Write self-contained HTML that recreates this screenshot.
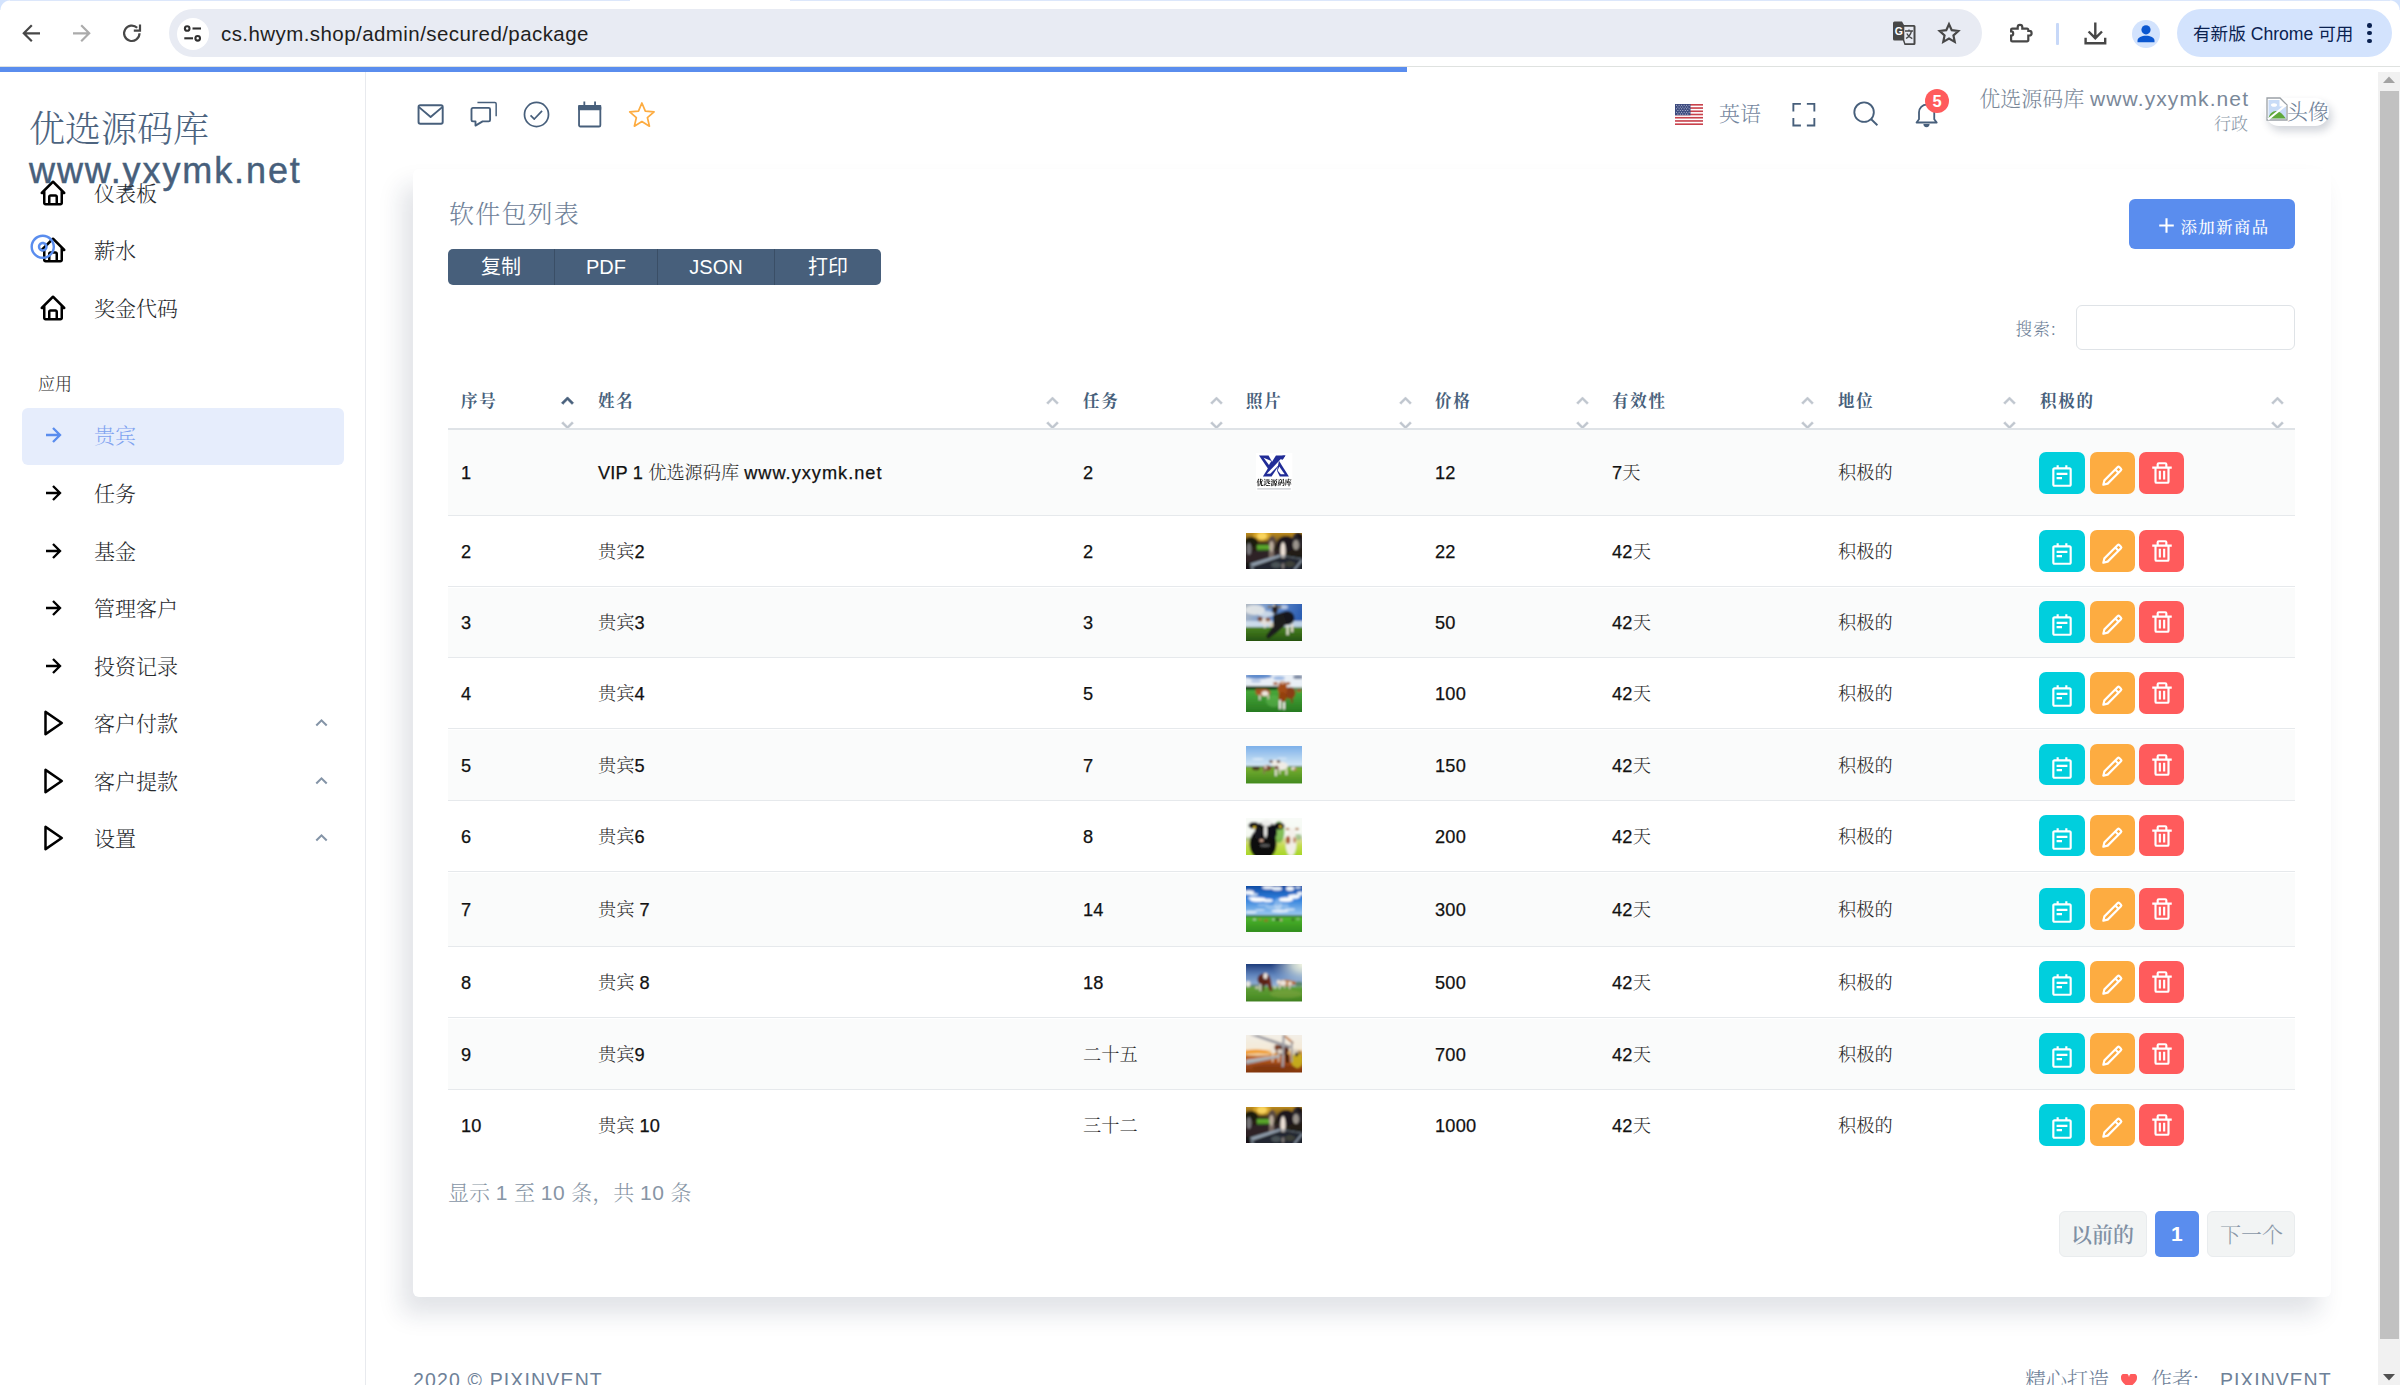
<!DOCTYPE html><html lang="zh-CN"><head><meta charset="utf-8"><title>软件包列表</title><style>
html,body{margin:0;padding:0;}
body{width:2400px;height:1385px;overflow:hidden;background:#fff;position:relative;font-family:"Liberation Sans","Noto Serif CJK SC",serif;font-weight:300;}
.a{position:absolute;white-space:nowrap;}
.sans{font-family:"Liberation Sans","Noto Sans CJK SC",sans-serif;font-weight:400;}
.td{font-weight:300;}
.td span{-webkit-text-stroke:0.25px #111;color:#111;font-weight:400}
</style></head><body><div class="a" style="left:364.7px;top:72.0px;width:1.4px;height:1313.0px;background:#E8EAEE;"></div><div class="a " style="left:29.0px;top:105.0px;line-height:50px;font-size:36.0px;color:#4d647f;">优选源码库</div><div class="a " style="left:29.0px;top:146.0px;line-height:50px;font-size:36.0px;color:#475F7B;letter-spacing:1.9px;-webkit-text-stroke:0.45px #475F7B;">www.yxymk.net</div><svg class="a" style="left:38.0px;top:178.0px;" width="30.0" height="30.0" viewBox="0 0 24 24" fill="#000"><path d="M3 13h1v7c0 1.103.897 2 2 2h12c1.103 0 2-.897 2-2v-7h1a1 1 0 0 0 .707-1.707l-9-9a.999.999 0 0 0-1.414 0l-9 9A1 1 0 0 0 3 13zm7 7v-5h4v5h-4zm2-15.586 6 6V15l.001 5H16v-5c0-1.103-.897-2-2-2h-4c-1.103 0-2 .897-2 2v5H6v-9.586l6-6z"/></svg><div class="a " style="left:94.0px;top:178.0px;line-height:32px;font-size:21.0px;color:#26292d;font-weight:300;">仪表板</div><svg class="a" style="left:38.0px;top:235.0px;" width="30.0" height="30.0" viewBox="0 0 24 24" fill="#000"><path d="M3 13h1v7c0 1.103.897 2 2 2h12c1.103 0 2-.897 2-2v-7h1a1 1 0 0 0 .707-1.707l-9-9a.999.999 0 0 0-1.414 0l-9 9A1 1 0 0 0 3 13zm7 7v-5h4v5h-4zm2-15.586 6 6V15l.001 5H16v-5c0-1.103-.897-2-2-2h-4c-1.103 0-2 .897-2 2v5H6v-9.586l6-6z"/></svg><div class="a " style="left:94.0px;top:235.0px;line-height:32px;font-size:21.0px;color:#26292d;font-weight:300;">薪水</div><svg class="a" style="left:38.0px;top:293.0px;" width="30.0" height="30.0" viewBox="0 0 24 24" fill="#000"><path d="M3 13h1v7c0 1.103.897 2 2 2h12c1.103 0 2-.897 2-2v-7h1a1 1 0 0 0 .707-1.707l-9-9a.999.999 0 0 0-1.414 0l-9 9A1 1 0 0 0 3 13zm7 7v-5h4v5h-4zm2-15.586 6 6V15l.001 5H16v-5c0-1.103-.897-2-2-2h-4c-1.103 0-2 .897-2 2v5H6v-9.586l6-6z"/></svg><div class="a " style="left:94.0px;top:293.0px;line-height:32px;font-size:21.0px;color:#26292d;font-weight:300;">奖金代码</div><svg class="a" style="left:27.8px;top:232.4px;" width="29.5" height="29.5" viewBox="0 0 24 24" fill="#5A8DEE"><path d="M12 2C6.486 2 2 6.486 2 12s4.486 10 10 10 10-4.486 10-10S17.514 2 12 2zm0 18c-4.411 0-8-3.589-8-8s3.589-8 8-8 8 3.589 8 8-3.589 8-8 8z"/><path d="M12 8c-2.206 0-4 1.794-4 4s1.794 4 4 4 4-1.794 4-4-1.794-4-4-4zm0 6c-1.103 0-2-.897-2-2s.897-2 2-2 2 .897 2 2-.897 2-2 2z"/></svg><div class="a " style="left:38.0px;top:372.0px;line-height:26px;font-size:17.0px;color:#2c2c2c;">应用</div><div class="a" style="left:22.0px;top:408.0px;width:322.0px;height:56.5px;background:#E6EDFC;border-radius:6px;"></div><svg class="a" style="left:39.0px;top:421.0px;" width="28.0" height="28.0" viewBox="0 0 24 24" fill="#5A8DEE"><path d="m11.293 17.293 1.414 1.414L19.414 12l-6.707-6.707-1.414 1.414L15.586 11H6v2h9.586z"/></svg><div class="a " style="left:94.0px;top:420.0px;line-height:32px;font-size:21.0px;color:#7FA3F0;font-weight:300;">贵宾</div><svg class="a" style="left:39.0px;top:479.0px;" width="28.0" height="28.0" viewBox="0 0 24 24" fill="#000"><path d="m11.293 17.293 1.414 1.414L19.414 12l-6.707-6.707-1.414 1.414L15.586 11H6v2h9.586z"/></svg><div class="a " style="left:94.0px;top:478.0px;line-height:32px;font-size:21.0px;color:#26292d;font-weight:300;">任务</div><svg class="a" style="left:39.0px;top:537.0px;" width="28.0" height="28.0" viewBox="0 0 24 24" fill="#000"><path d="m11.293 17.293 1.414 1.414L19.414 12l-6.707-6.707-1.414 1.414L15.586 11H6v2h9.586z"/></svg><div class="a " style="left:94.0px;top:536.0px;line-height:32px;font-size:21.0px;color:#26292d;font-weight:300;">基金</div><svg class="a" style="left:39.0px;top:594.0px;" width="28.0" height="28.0" viewBox="0 0 24 24" fill="#000"><path d="m11.293 17.293 1.414 1.414L19.414 12l-6.707-6.707-1.414 1.414L15.586 11H6v2h9.586z"/></svg><div class="a " style="left:94.0px;top:593.0px;line-height:32px;font-size:21.0px;color:#26292d;font-weight:300;">管理客户</div><svg class="a" style="left:39.0px;top:652.0px;" width="28.0" height="28.0" viewBox="0 0 24 24" fill="#000"><path d="m11.293 17.293 1.414 1.414L19.414 12l-6.707-6.707-1.414 1.414L15.586 11H6v2h9.586z"/></svg><div class="a " style="left:94.0px;top:651.0px;line-height:32px;font-size:21.0px;color:#26292d;font-weight:300;">投资记录</div><svg class="a" style="left:38.0px;top:708.0px;" width="30.0" height="30.0" viewBox="0 0 24 24" fill="#000"><path d="M5.536 21.886a1.004 1.004 0 0 0 1.033-.064l13-9a1 1 0 0 0 0-1.644l-13-9A1 1 0 0 0 5 3v18a1 1 0 0 0 .536.886zM7 4.909 17.243 12 7 19.091V4.909z"/></svg><svg class="a" style="left:308.5px;top:710.5px;" width="25.0" height="25.0" viewBox="0 0 24 24" fill="#8494A7"><path d="m6.293 13.293 1.414 1.414L12 10.414l4.293 4.293 1.414-1.414L12 7.586z"/></svg><div class="a " style="left:94.0px;top:708.0px;line-height:32px;font-size:21.0px;color:#26292d;font-weight:300;">客户付款</div><svg class="a" style="left:38.0px;top:766.0px;" width="30.0" height="30.0" viewBox="0 0 24 24" fill="#000"><path d="M5.536 21.886a1.004 1.004 0 0 0 1.033-.064l13-9a1 1 0 0 0 0-1.644l-13-9A1 1 0 0 0 5 3v18a1 1 0 0 0 .536.886zM7 4.909 17.243 12 7 19.091V4.909z"/></svg><svg class="a" style="left:308.5px;top:768.5px;" width="25.0" height="25.0" viewBox="0 0 24 24" fill="#8494A7"><path d="m6.293 13.293 1.414 1.414L12 10.414l4.293 4.293 1.414-1.414L12 7.586z"/></svg><div class="a " style="left:94.0px;top:766.0px;line-height:32px;font-size:21.0px;color:#26292d;font-weight:300;">客户提款</div><svg class="a" style="left:38.0px;top:823.0px;" width="30.0" height="30.0" viewBox="0 0 24 24" fill="#000"><path d="M5.536 21.886a1.004 1.004 0 0 0 1.033-.064l13-9a1 1 0 0 0 0-1.644l-13-9A1 1 0 0 0 5 3v18a1 1 0 0 0 .536.886zM7 4.909 17.243 12 7 19.091V4.909z"/></svg><svg class="a" style="left:308.5px;top:825.5px;" width="25.0" height="25.0" viewBox="0 0 24 24" fill="#8494A7"><path d="m6.293 13.293 1.414 1.414L12 10.414l4.293 4.293 1.414-1.414L12 7.586z"/></svg><div class="a " style="left:94.0px;top:823.0px;line-height:32px;font-size:21.0px;color:#26292d;font-weight:300;">设置</div><svg class="a" style="left:414.5px;top:99.0px;color:#475F7B" width="31.0" height="31.0" viewBox="0 0 24 24" fill="none" stroke="#475F7B" stroke-width="1.5" stroke-linejoin="round"><rect x="2.750" y="4.900" width="18.700" height="14.300" rx="1.300"/><path d="M3.100 6.300 12.100 14 21.100 6.300"/></svg><svg class="a" style="left:467.5px;top:98.5px;color:#475F7B" width="31.0" height="31.0" viewBox="0 0 24 24" fill="none" stroke="#475F7B" stroke-width="1.45" stroke-linejoin="round"><path d="M3.800 6.900h12.200a1.100 1.100 0 0 1 1.100 1.100v8.200a1.100 1.100 0 0 1-1.100 1.100h-4.700L5.800 20.600V17.300H3.800a1.100 1.100 0 0 1-1.100-1.100V8a1.100 1.100 0 0 1 1.100-1.100z"/><path d="M7.300 2.750H20.800a1 1 0 0 1 1 1V13.400" stroke-width="1.150"/></svg><svg class="a" style="left:520.5px;top:99.0px;color:#475F7B" width="31.0" height="31.0" viewBox="0 0 24 24" fill="none" stroke="#475F7B" stroke-width="1.35" stroke-linejoin="round"><circle cx="12" cy="12" r="9.300"/><path d="M7.400 12.700 10.300 15.500 16.300 9.200"/></svg><svg class="a" style="left:573.5px;top:99.0px;color:#475F7B" width="31.0" height="31.0" viewBox="0 0 24 24" fill="none" stroke="#475F7B" stroke-width="1.4" stroke-linejoin="round"><rect x="3.900" y="5.300" width="16.500" height="16" rx="1"/><rect x="3.900" y="5.300" width="16.500" height="2.700" fill="currentColor"/><path d="M8 2v3.500M16.300 2v3.500"/></svg><svg class="a" style="left:626.0px;top:99.0px;color:#FDAC41" width="31.0" height="31.0" viewBox="0 0 24 24" fill="none" stroke="#FDAC41" stroke-width="1.35" stroke-linejoin="round"><polygon points="12.30,3.10 14.95,9.36 21.72,9.94 16.58,14.39 18.12,21.01 12.30,17.50 6.480,21.010 8.020,14.390 2.880,9.940 9.650,9.360"/></svg><svg class="a" style="left:1675px;top:104px" width="28" height="21" viewBox="0 0 28 21"><rect width="28" height="21" fill="#fff"/><rect y="0.00" width="28" height="1.62" fill="#C8414B"/><rect y="3.23" width="28" height="1.62" fill="#C8414B"/><rect y="6.46" width="28" height="1.62" fill="#C8414B"/><rect y="9.69" width="28" height="1.62" fill="#C8414B"/><rect y="12.92" width="28" height="1.62" fill="#C8414B"/><rect y="16.15" width="28" height="1.62" fill="#C8414B"/><rect y="19.38" width="28" height="1.62" fill="#C8414B"/><rect width="15.5" height="11.3" fill="#3C4A7E"/><circle cx="1.6" cy="1.3" r="0.55" fill="#cfd3e6"/><circle cx="4.1" cy="1.3" r="0.55" fill="#cfd3e6"/><circle cx="6.6" cy="1.3" r="0.55" fill="#cfd3e6"/><circle cx="9.1" cy="1.3" r="0.55" fill="#cfd3e6"/><circle cx="11.6" cy="1.3" r="0.55" fill="#cfd3e6"/><circle cx="14.1" cy="1.3" r="0.55" fill="#cfd3e6"/><circle cx="2.9" cy="3.0" r="0.55" fill="#cfd3e6"/><circle cx="5.3" cy="3.0" r="0.55" fill="#cfd3e6"/><circle cx="7.8" cy="3.0" r="0.55" fill="#cfd3e6"/><circle cx="10.3" cy="3.0" r="0.55" fill="#cfd3e6"/><circle cx="12.8" cy="3.0" r="0.55" fill="#cfd3e6"/><circle cx="1.6" cy="4.8" r="0.55" fill="#cfd3e6"/><circle cx="4.1" cy="4.8" r="0.55" fill="#cfd3e6"/><circle cx="6.6" cy="4.8" r="0.55" fill="#cfd3e6"/><circle cx="9.1" cy="4.8" r="0.55" fill="#cfd3e6"/><circle cx="11.6" cy="4.8" r="0.55" fill="#cfd3e6"/><circle cx="14.1" cy="4.8" r="0.55" fill="#cfd3e6"/><circle cx="2.9" cy="6.5" r="0.55" fill="#cfd3e6"/><circle cx="5.3" cy="6.5" r="0.55" fill="#cfd3e6"/><circle cx="7.8" cy="6.5" r="0.55" fill="#cfd3e6"/><circle cx="10.3" cy="6.5" r="0.55" fill="#cfd3e6"/><circle cx="12.8" cy="6.5" r="0.55" fill="#cfd3e6"/><circle cx="1.6" cy="8.3" r="0.55" fill="#cfd3e6"/><circle cx="4.1" cy="8.3" r="0.55" fill="#cfd3e6"/><circle cx="6.6" cy="8.3" r="0.55" fill="#cfd3e6"/><circle cx="9.1" cy="8.3" r="0.55" fill="#cfd3e6"/><circle cx="11.6" cy="8.3" r="0.55" fill="#cfd3e6"/><circle cx="14.1" cy="8.3" r="0.55" fill="#cfd3e6"/><circle cx="2.9" cy="10.1" r="0.55" fill="#cfd3e6"/><circle cx="5.3" cy="10.1" r="0.55" fill="#cfd3e6"/><circle cx="7.8" cy="10.1" r="0.55" fill="#cfd3e6"/><circle cx="10.3" cy="10.1" r="0.55" fill="#cfd3e6"/><circle cx="12.8" cy="10.1" r="0.55" fill="#cfd3e6"/></svg><div class="a " style="left:1719.0px;top:98.0px;line-height:32px;font-size:21.0px;color:#7587a0;">英语</div><svg class="a" style="left:1788.0px;top:99.0px;color:#475F7B" width="31.0" height="31.0" viewBox="0 0 24 24" fill="none" stroke="#475F7B" stroke-width="1.45" stroke-linejoin="round"><path d="M4.150 9.600V3.800H10M14.600 3.800h5.800v5.800M20.400 14.700v5.800H14.600M10 20.500H4.150v-5.800" stroke-linejoin="miter"/></svg><svg class="a" style="left:1850.1px;top:98.7px;color:#475F7B" width="31.0" height="31.0" viewBox="0 0 24 24" fill="none" stroke="#475F7B" stroke-width="1.45" stroke-linejoin="round"><circle cx="10.900" cy="10.200" r="7.550"/><path d="M16.200 15.500 21.200 20.300"/></svg><svg class="a" style="left:1910.5px;top:99.0px;color:#475F7B" width="31.0" height="31.0" viewBox="0 0 24 24" fill="none" stroke="#475F7B" stroke-width="1.4" stroke-linejoin="round"><path d="M4.300 18.200 6.200 15.700V10.200a5.900 5.900 0 0 1 11.800 0v5.500l1.900 2.500z"/><path d="M9.600 19.400h4.800a2.400 2.400 0 0 1-4.800 0z" fill="currentColor" stroke="none"/></svg><div class="a" style="left:1925px;top:89px;width:24px;height:24px;border-radius:12px;background:#FF5B5C;color:#fff;font-size:16.5px;line-height:24px;text-align:center;font-weight:700">5</div><div class="a " style="right:152.0px;top:83.0px;line-height:32px;font-size:21.0px;color:#7A8899;">优选源码库 <span style="letter-spacing:1.1px;margin-right:-1.1px">www.yxymk.net</span></div><div class="a " style="right:152.0px;top:112.0px;line-height:26px;font-size:17.0px;color:#8A98A8;">行政</div><div class="a" style="left:2265px;top:98px;width:64px;height:28px;border-radius:14px;background:#fff;box-shadow:3px 5px 9px rgba(25,42,70,.2)"></div><svg class="a" style="left:2266px;top:97px" width="22" height="24" viewBox="0 0 22 24"><path d="M1 1h13l7 7v15H1z" fill="#fff" stroke="#9AA0A6" stroke-width="1.300"/><path d="M2.500 3h11v6.500l6.500 0v12H2.500z" fill="#C9DCF7"/><path d="M2.500 21.500c1-6 6-9 10-7s5 4 7.500 7z" fill="#5FA83B"/><ellipse cx="8" cy="8" rx="3" ry="1.800" fill="#fff"/><path d="M2 22.500 L20 8" stroke="#fff" stroke-width="2.200"/></svg><div class="a " style="left:2287.0px;top:96.0px;line-height:32px;font-size:21.0px;color:#6E8198;">头像</div><div class="a" style="left:412.8px;top:169px;width:1918.2px;height:1127.7px;background:#fff;border-radius:6px;box-shadow:-11px 17px 25px 0 rgba(25,42,70,.13)"></div><div class="a " style="left:449.0px;top:195.0px;line-height:38px;font-size:25.0px;color:#6E8198;letter-spacing:1.2px;">软件包列表</div><div class="a" style="left:448px;top:249px;width:433px;height:36px;border-radius:5px;background:#475F7B;"></div><div class="a" style="left:553.8px;top:249.0px;width:1.0px;height:36.0px;background:#3a4e66;"></div><div class="a" style="left:657.0px;top:249.0px;width:1.0px;height:36.0px;background:#3a4e66;"></div><div class="a" style="left:774.0px;top:249.0px;width:1.0px;height:36.0px;background:#3a4e66;"></div><div class="a sans" style="left:501px;top:249px;width:100px;margin-left:-50px;text-align:center;line-height:36px;font-size:20px;color:#fff">复制</div><div class="a sans" style="left:606px;top:249px;width:100px;margin-left:-50px;text-align:center;line-height:36px;font-size:20px;color:#fff">PDF</div><div class="a sans" style="left:716px;top:249px;width:100px;margin-left:-50px;text-align:center;line-height:36px;font-size:20px;color:#fff">JSON</div><div class="a sans" style="left:828px;top:249px;width:100px;margin-left:-50px;text-align:center;line-height:36px;font-size:20px;color:#fff">打印</div><div class="a" style="left:2129px;top:199px;width:166px;height:50px;border-radius:6px;background:#5A8DEE"></div><svg class="a" style="left:2154.0px;top:213.0px;" width="25.0" height="25.0" viewBox="0 0 24 24" fill="#fff"><path d="M19 11h-6V5h-2v6H5v2h6v6h2v-6h6z"/></svg><div class="a " style="left:2180.5px;top:215.0px;line-height:25px;font-size:16.4px;color:#fff;font-weight:500;letter-spacing:1.45px;">添加新商品</div><div class="a " style="left:2015.5px;top:316.5px;line-height:25px;font-size:16.5px;color:#6E8198;letter-spacing:1.3px;">搜索:</div><div class="a" style="left:2075.5px;top:305.2px;width:217.5px;height:42.5px;border:1.4px solid #DFE3E7;border-radius:6px;background:#fff"></div><div class="a " style="left:461.0px;top:389.0px;line-height:25px;font-size:16.5px;color:#475F7B;font-weight:700;letter-spacing:1.7px;">序号</div><svg class="a" style="left:555.0px;top:388.5px;stroke:#475F7B;stroke-width:0.8px;" width="25.0" height="25.0" viewBox="0 0 24 24" fill="#475F7B"><path d="m6.293 13.293 1.414 1.414L12 10.414l4.293 4.293 1.414-1.414L12 7.586z"/></svg><svg class="a" style="left:555.0px;top:412.0px;stroke:#BFC6CE;stroke-width:0.5px;" width="25.0" height="25.0" viewBox="0 0 24 24" fill="#BFC6CE"><path d="M16.293 9.293 12 13.586 7.707 9.293l-1.414 1.414L12 16.414l5.707-5.707z"/></svg><div class="a " style="left:598.0px;top:389.0px;line-height:25px;font-size:16.5px;color:#475F7B;font-weight:700;letter-spacing:1.7px;">姓名</div><svg class="a" style="left:1039.5px;top:388.5px;stroke:#BFC6CE;stroke-width:0.5px;" width="25.0" height="25.0" viewBox="0 0 24 24" fill="#BFC6CE"><path d="m6.293 13.293 1.414 1.414L12 10.414l4.293 4.293 1.414-1.414L12 7.586z"/></svg><svg class="a" style="left:1039.5px;top:412.0px;stroke:#BFC6CE;stroke-width:0.5px;" width="25.0" height="25.0" viewBox="0 0 24 24" fill="#BFC6CE"><path d="M16.293 9.293 12 13.586 7.707 9.293l-1.414 1.414L12 16.414l5.707-5.707z"/></svg><div class="a " style="left:1083.0px;top:389.0px;line-height:25px;font-size:16.5px;color:#475F7B;font-weight:700;letter-spacing:1.7px;">任务</div><svg class="a" style="left:1203.5px;top:388.5px;stroke:#BFC6CE;stroke-width:0.5px;" width="25.0" height="25.0" viewBox="0 0 24 24" fill="#BFC6CE"><path d="m6.293 13.293 1.414 1.414L12 10.414l4.293 4.293 1.414-1.414L12 7.586z"/></svg><svg class="a" style="left:1203.5px;top:412.0px;stroke:#BFC6CE;stroke-width:0.5px;" width="25.0" height="25.0" viewBox="0 0 24 24" fill="#BFC6CE"><path d="M16.293 9.293 12 13.586 7.707 9.293l-1.414 1.414L12 16.414l5.707-5.707z"/></svg><div class="a " style="left:1246.0px;top:389.0px;line-height:25px;font-size:16.5px;color:#475F7B;font-weight:700;letter-spacing:1.7px;">照片</div><svg class="a" style="left:1392.5px;top:388.5px;stroke:#BFC6CE;stroke-width:0.5px;" width="25.0" height="25.0" viewBox="0 0 24 24" fill="#BFC6CE"><path d="m6.293 13.293 1.414 1.414L12 10.414l4.293 4.293 1.414-1.414L12 7.586z"/></svg><svg class="a" style="left:1392.5px;top:412.0px;stroke:#BFC6CE;stroke-width:0.5px;" width="25.0" height="25.0" viewBox="0 0 24 24" fill="#BFC6CE"><path d="M16.293 9.293 12 13.586 7.707 9.293l-1.414 1.414L12 16.414l5.707-5.707z"/></svg><div class="a " style="left:1435.0px;top:389.0px;line-height:25px;font-size:16.5px;color:#475F7B;font-weight:700;letter-spacing:1.7px;">价格</div><svg class="a" style="left:1569.5px;top:388.5px;stroke:#BFC6CE;stroke-width:0.5px;" width="25.0" height="25.0" viewBox="0 0 24 24" fill="#BFC6CE"><path d="m6.293 13.293 1.414 1.414L12 10.414l4.293 4.293 1.414-1.414L12 7.586z"/></svg><svg class="a" style="left:1569.5px;top:412.0px;stroke:#BFC6CE;stroke-width:0.5px;" width="25.0" height="25.0" viewBox="0 0 24 24" fill="#BFC6CE"><path d="M16.293 9.293 12 13.586 7.707 9.293l-1.414 1.414L12 16.414l5.707-5.707z"/></svg><div class="a " style="left:1612.0px;top:389.0px;line-height:25px;font-size:16.5px;color:#475F7B;font-weight:700;letter-spacing:1.7px;">有效性</div><svg class="a" style="left:1794.5px;top:388.5px;stroke:#BFC6CE;stroke-width:0.5px;" width="25.0" height="25.0" viewBox="0 0 24 24" fill="#BFC6CE"><path d="m6.293 13.293 1.414 1.414L12 10.414l4.293 4.293 1.414-1.414L12 7.586z"/></svg><svg class="a" style="left:1794.5px;top:412.0px;stroke:#BFC6CE;stroke-width:0.5px;" width="25.0" height="25.0" viewBox="0 0 24 24" fill="#BFC6CE"><path d="M16.293 9.293 12 13.586 7.707 9.293l-1.414 1.414L12 16.414l5.707-5.707z"/></svg><div class="a " style="left:1838.0px;top:389.0px;line-height:25px;font-size:16.5px;color:#475F7B;font-weight:700;letter-spacing:1.7px;">地位</div><svg class="a" style="left:1996.5px;top:388.5px;stroke:#BFC6CE;stroke-width:0.5px;" width="25.0" height="25.0" viewBox="0 0 24 24" fill="#BFC6CE"><path d="m6.293 13.293 1.414 1.414L12 10.414l4.293 4.293 1.414-1.414L12 7.586z"/></svg><svg class="a" style="left:1996.5px;top:412.0px;stroke:#BFC6CE;stroke-width:0.5px;" width="25.0" height="25.0" viewBox="0 0 24 24" fill="#BFC6CE"><path d="M16.293 9.293 12 13.586 7.707 9.293l-1.414 1.414L12 16.414l5.707-5.707z"/></svg><div class="a " style="left:2040.0px;top:389.0px;line-height:25px;font-size:16.5px;color:#475F7B;font-weight:700;letter-spacing:1.7px;">积极的</div><svg class="a" style="left:2264.5px;top:388.5px;stroke:#BFC6CE;stroke-width:0.5px;" width="25.0" height="25.0" viewBox="0 0 24 24" fill="#BFC6CE"><path d="m6.293 13.293 1.414 1.414L12 10.414l4.293 4.293 1.414-1.414L12 7.586z"/></svg><svg class="a" style="left:2264.5px;top:412.0px;stroke:#BFC6CE;stroke-width:0.5px;" width="25.0" height="25.0" viewBox="0 0 24 24" fill="#BFC6CE"><path d="M16.293 9.293 12 13.586 7.707 9.293l-1.414 1.414L12 16.414l5.707-5.707z"/></svg><div class="a" style="left:448.0px;top:427.7px;width:1847.0px;height:3.0px;background:#DFE3E7;"></div><div class="a" style="left:448.0px;top:430.0px;width:1847.0px;height:85.0px;background:#FAFBFB;"></div><div class="a" style="left:448.0px;top:515.0px;width:1847.0px;height:1.4px;background:#E6E9EC;"></div><div class="a td" style="left:461.0px;top:460.2px;line-height:27px;font-size:18.2px;color:#2a2a2a;"><span style="letter-spacing:0.2px">1</span></div><div class="a td" style="left:598.0px;top:460.2px;line-height:27px;font-size:18.2px;color:#2a2a2a;"><span style="letter-spacing:0.2px">VIP 1</span> 优选源码库 <span style="letter-spacing:1px">www.yxymk.net</span></div><div class="a td" style="left:1083.0px;top:460.2px;line-height:27px;font-size:18.2px;color:#2a2a2a;"><span style="letter-spacing:0.2px">2</span></div><div class="a td" style="left:1435.0px;top:460.2px;line-height:27px;font-size:18.2px;color:#2a2a2a;"><span style="letter-spacing:0.2px">12</span></div><div class="a td" style="left:1612.0px;top:460.2px;line-height:27px;font-size:18.2px;color:#2a2a2a;"><span style="letter-spacing:0.2px">7</span>天</div><div class="a td" style="left:1838.0px;top:460.2px;line-height:27px;font-size:18.2px;color:#2a2a2a;">积极的</div><svg class="a" style="left:1246.0px;top:444.5px" width="56" height="56" viewBox="0 0 56 56"><rect x="10" y="8" width="36.400" height="37.700" fill="#fff"/><g opacity="0.99"><polygon points="29.91,10.44 39.44,10.44 25.58,31.45 16.91,31.45" fill="#1f2a96"/><polygon points="35.32,13.47 37.70,14.99 24.28,28.85 20.81,28.85" fill="#fff"/><polygon points="36.62,10.44 39.44,10.44 36.19,14.99 34.67,13.69" fill="#1f2a96"/><polygon points="13.02,10.44 22.54,10.44 27.31,19.10 23.19,25.38" fill="#1f2a96"/><polygon points="17.56,12.82 25.36,15.94 22.98,19.97" fill="#fff"/><polygon points="32.94,15.86 42.90,31.45 33.81,31.45 30.99,25.82" fill="#1f2a96"/><polygon points="33.29,21.49 38.66,29.19 34.76,29.19 31.64,25.38" fill="#fff"/><text x="28.17" y="40.32" font-size="7.3" font-weight="900" fill="#222" text-anchor="middle" textLength="35.5" lengthAdjust="spacingAndGlyphs" style="font-family:'Noto Serif CJK SC',serif">优选源码库</text><rect x="11.28" y="43.14" width="33.5" height="1.5" fill="#c3c6cb" opacity="0.8"/></g></svg><div class="a" style="left:2039.0px;top:452.1px;width:46.0px;height:41.7px;border-radius:7px;background:#00CFDD"></div><svg class="a" style="left:2049.2px;top:463.1px;" width="26.0" height="26.0" viewBox="0 0 24 24" fill="#fff"><path d="M19 4h-2V2h-2v2H9V2H7v2H5c-1.103 0-2 .897-2 2v14c0 1.103.897 2 2 2h14c1.103 0 2-.897 2-2V6c0-1.103-.897-2-2-2zM5 20V6h14l.002 14H5z"/><path d="M7 9h10v2H7zm0 4h5v2H7z"/></svg><div class="a" style="left:2090.0px;top:452.1px;width:44.8px;height:41.7px;border-radius:7px;background:#FDAC41"></div><svg class="a" style="left:2098.9px;top:462.6px;" width="26.0" height="26.0" viewBox="0 0 24 24" fill="#fff"><path d="M4 21a1 1 0 0 0 .24 0l4-1a1 1 0 0 0 .47-.26L21 7.41a2 2 0 0 0 0-2.820L19.420 3a2 2 0 0 0-2.830 0L4.300 15.290a1.060 1.060 0 0 0-.27.470l-1 4A1 1 0 0 0 3.760 21 1 1 0 0 0 4 21zM18 4.410 19.590 6 18 7.590 16.420 6zM5.910 16.510 15 7.410 16.590 9l-9.100 9.100-2.110.530z"/></svg><div class="a" style="left:2139.2px;top:452.1px;width:45.3px;height:41.7px;border-radius:7px;background:#FF5B5C"></div><svg class="a" style="left:2148.8px;top:460.3px;" width="26.0" height="26.0" viewBox="0 0 24 24" fill="#fff"><path d="M5 20a2 2 0 0 0 2 2h10a2 2 0 0 0 2-2V8h2V6h-4V4a2 2 0 0 0-2-2H9a2 2 0 0 0-2 2v2H3v2h2zM9 4h6v2H9zM8 8h9v12H7V8z"/><path d="M9 10h2v8H9zm4 0h2v8h-2z"/></svg><div class="a" style="left:448.0px;top:586.0px;width:1847.0px;height:1.4px;background:#E6E9EC;"></div><div class="a td" style="left:461.0px;top:539.0px;line-height:27px;font-size:18.2px;color:#2a2a2a;"><span style="letter-spacing:0.2px">2</span></div><div class="a td" style="left:598.0px;top:539.0px;line-height:27px;font-size:18.2px;color:#2a2a2a;">贵宾<span style="letter-spacing:0.2px">2</span></div><div class="a td" style="left:1083.0px;top:539.0px;line-height:27px;font-size:18.2px;color:#2a2a2a;"><span style="letter-spacing:0.2px">2</span></div><div class="a td" style="left:1435.0px;top:539.0px;line-height:27px;font-size:18.2px;color:#2a2a2a;"><span style="letter-spacing:0.2px">22</span></div><div class="a td" style="left:1612.0px;top:539.0px;line-height:27px;font-size:18.2px;color:#2a2a2a;"><span style="letter-spacing:0.2px">42</span>天</div><div class="a td" style="left:1838.0px;top:539.0px;line-height:27px;font-size:18.2px;color:#2a2a2a;">积极的</div><svg class="a" style="left:1246.0px;top:532.6px" width="56.0" height="36.5" viewBox="0 0 56 36.5"><defs><filter id="t1_b" x="-10%" y="-10%" width="120%" height="120%"><feGaussianBlur stdDeviation="0.85"/></filter><clipPath id="t1_c"><rect width="56" height="36.5"/></clipPath><linearGradient id="t1_g" x1="0" y1="0" x2="0" y2="1"><stop offset="0" stop-color="#c9921c"/><stop offset="0.2" stop-color="#8a6a22"/><stop offset="0.32" stop-color="#2a2418"/><stop offset="1" stop-color="#0e0c12"/></linearGradient></defs><g clip-path="url(#t1_c)"><g filter="url(#t1_b)"><rect x="-2" y="-2" width="60" height="42" fill="url(#t1_g)" opacity="1"/><ellipse cx="16" cy="3" rx="5" ry="3.5" fill="#fff2a0" opacity="1"/><ellipse cx="16" cy="3" rx="9" ry="5" fill="#f5c030" opacity="0.6"/><ellipse cx="5" cy="9" rx="7" ry="5" fill="#1c1a10" opacity="1"/><rect x="11" y="12" width="13" height="6" fill="#5aa52c" opacity="1"/><rect x="11" y="16" width="13" height="2" fill="#3c7a20" opacity="1"/><polygon points="0,18 34,17 34,24 0,30" fill="#2e2226" opacity="1"/><ellipse cx="26" cy="9" rx="4" ry="6" fill="#5a4a40" opacity="1"/><ellipse cx="25.5" cy="14" rx="2.2" ry="6" fill="#c8b8a8" opacity="0.9"/><rect x="23" y="18" width="5" height="7" fill="#8a7a70" opacity="0.8"/><ellipse cx="40" cy="11" rx="9" ry="8" fill="#1a181c" opacity="1"/><ellipse cx="37" cy="18" rx="2.6" ry="9" fill="#ece0d6" opacity="1"/><ellipse cx="37" cy="27" rx="2.2" ry="2" fill="#d8a8a0" opacity="1"/><ellipse cx="52" cy="8" rx="6" ry="9" fill="#2a262a" opacity="1"/><ellipse cx="50" cy="12" rx="3" ry="5" fill="#b8b0a8" opacity="0.8"/><ellipse cx="54" cy="3" rx="3" ry="2.5" fill="#1a1416" opacity="1"/><ellipse cx="3" cy="16" rx="2.5" ry="6" fill="#8a8a90" opacity="0.8"/><polygon points="4,30.500 34,21.500 34.500,24 7,33.500" fill="#8f9cab" opacity="1"/><polygon points="4,30.500 7,33.500 9,37 5,37" fill="#6a7480" opacity="1"/><polygon points="8,34 34,24.500 56,26 56,37 9,37" fill="#232830" opacity="1"/><ellipse cx="30" cy="32" rx="5" ry="3" fill="#5a6468" opacity="0.7"/><ellipse cx="44" cy="31" rx="5" ry="3" fill="#4a4a3a" opacity="0.7"/><ellipse cx="37" cy="33" rx="1.5" ry="3" fill="#b8a8a0" opacity="0.6"/><line x1="34" y1="22.5" x2="56" y2="26" stroke="#6a7684" stroke-width="1.2" opacity="1"/><line x1="56" y1="27" x2="48" y2="37" stroke="#8f9cab" stroke-width="1.6" opacity="1"/></g></g></svg><div class="a" style="left:2039.0px;top:530.0px;width:46.0px;height:41.7px;border-radius:7px;background:#00CFDD"></div><svg class="a" style="left:2049.2px;top:541.0px;" width="26.0" height="26.0" viewBox="0 0 24 24" fill="#fff"><path d="M19 4h-2V2h-2v2H9V2H7v2H5c-1.103 0-2 .897-2 2v14c0 1.103.897 2 2 2h14c1.103 0 2-.897 2-2V6c0-1.103-.897-2-2-2zM5 20V6h14l.002 14H5z"/><path d="M7 9h10v2H7zm0 4h5v2H7z"/></svg><div class="a" style="left:2090.0px;top:530.0px;width:44.8px;height:41.7px;border-radius:7px;background:#FDAC41"></div><svg class="a" style="left:2098.9px;top:540.5px;" width="26.0" height="26.0" viewBox="0 0 24 24" fill="#fff"><path d="M4 21a1 1 0 0 0 .24 0l4-1a1 1 0 0 0 .47-.26L21 7.41a2 2 0 0 0 0-2.820L19.420 3a2 2 0 0 0-2.830 0L4.300 15.290a1.060 1.060 0 0 0-.27.470l-1 4A1 1 0 0 0 3.760 21 1 1 0 0 0 4 21zM18 4.410 19.590 6 18 7.590 16.420 6zM5.910 16.510 15 7.410 16.590 9l-9.100 9.100-2.110.530z"/></svg><div class="a" style="left:2139.2px;top:530.0px;width:45.3px;height:41.7px;border-radius:7px;background:#FF5B5C"></div><svg class="a" style="left:2148.8px;top:538.2px;" width="26.0" height="26.0" viewBox="0 0 24 24" fill="#fff"><path d="M5 20a2 2 0 0 0 2 2h10a2 2 0 0 0 2-2V8h2V6h-4V4a2 2 0 0 0-2-2H9a2 2 0 0 0-2 2v2H3v2h2zM9 4h6v2H9zM8 8h9v12H7V8z"/><path d="M9 10h2v8H9zm4 0h2v8h-2z"/></svg><div class="a" style="left:448.0px;top:587.5px;width:1847.0px;height:69.5px;background:#FAFBFB;"></div><div class="a" style="left:448.0px;top:657.0px;width:1847.0px;height:1.4px;background:#E6E9EC;"></div><div class="a td" style="left:461.0px;top:610.0px;line-height:27px;font-size:18.2px;color:#2a2a2a;"><span style="letter-spacing:0.2px">3</span></div><div class="a td" style="left:598.0px;top:610.0px;line-height:27px;font-size:18.2px;color:#2a2a2a;">贵宾<span style="letter-spacing:0.2px">3</span></div><div class="a td" style="left:1083.0px;top:610.0px;line-height:27px;font-size:18.2px;color:#2a2a2a;"><span style="letter-spacing:0.2px">3</span></div><div class="a td" style="left:1435.0px;top:610.0px;line-height:27px;font-size:18.2px;color:#2a2a2a;"><span style="letter-spacing:0.2px">50</span></div><div class="a td" style="left:1612.0px;top:610.0px;line-height:27px;font-size:18.2px;color:#2a2a2a;"><span style="letter-spacing:0.2px">42</span>天</div><div class="a td" style="left:1838.0px;top:610.0px;line-height:27px;font-size:18.2px;color:#2a2a2a;">积极的</div><svg class="a" style="left:1246.0px;top:604.0px" width="56.0" height="37.0" viewBox="0 0 56 37"><defs><filter id="t2_b" x="-10%" y="-10%" width="120%" height="120%"><feGaussianBlur stdDeviation="0.85"/></filter><clipPath id="t2_c"><rect width="56" height="37"/></clipPath><linearGradient id="t2_s" x1="0" y1="0" x2="1" y2="0.15"><stop offset="0" stop-color="#b9bec2"/><stop offset="0.45" stop-color="#6f96d0"/><stop offset="1" stop-color="#2c5eb2"/></linearGradient><linearGradient id="t2_g" x1="0" y1="0" x2="0" y2="1"><stop offset="0" stop-color="#4a8420"/><stop offset="1" stop-color="#214b0f"/></linearGradient></defs><g clip-path="url(#t2_c)"><g filter="url(#t2_b)"><rect x="-2" y="-2" width="60" height="27" fill="url(#t2_s)" opacity="1"/><ellipse cx="9" cy="6" rx="10" ry="5" fill="#e6e8e8" opacity="0.9"/><ellipse cx="20" cy="10" rx="8" ry="3" fill="#dfe6ec" opacity="0.8"/><ellipse cx="38" cy="3" rx="4" ry="2" fill="#dfe6f0" opacity="0.7"/><rect x="-2" y="17" width="60" height="7" fill="#d6e4ee" opacity="0.85"/><rect x="-2" y="23" width="60" height="16" fill="url(#t2_g)" opacity="1"/><ellipse cx="19" cy="17" rx="6" ry="3.5" fill="#e4dfda" opacity="1"/><ellipse cx="14" cy="15" rx="2.5" ry="2.5" fill="#7a4a32" opacity="1"/><rect x="18" y="19" width="1.6" height="5" fill="#e8e2dc" opacity="1"/><rect x="23" y="19" width="1.6" height="4" fill="#e0d8d0" opacity="1"/><ellipse cx="22" cy="15.5" rx="2.5" ry="2" fill="#8a5a40" opacity="1"/><ellipse cx="41" cy="14" rx="7.5" ry="7" fill="#17171a" opacity="1"/><polygon points="27,11 37,8 41,20 29,30 22,35 20,32 27,22" fill="#1c1a1a" opacity="1"/><ellipse cx="29" cy="5" rx="3" ry="5" fill="#2a2420" opacity="1"/><ellipse cx="23.5" cy="3" rx="2" ry="1.3" fill="#7a6a40" opacity="1"/><ellipse cx="33.5" cy="3" rx="2" ry="1.3" fill="#7a6a40" opacity="1"/><ellipse cx="28" cy="1.5" rx="1.5" ry="1" fill="#e8e4dc" opacity="1"/><rect x="40.5" y="21" width="2.2" height="10" fill="#ece8dc" opacity="1"/><rect x="45" y="20" width="2.2" height="8" fill="#e4dccc" opacity="1"/><ellipse cx="26" cy="21" rx="1.5" ry="2" fill="#d8c8a0" opacity="0.8"/></g></g></svg><div class="a" style="left:2039.0px;top:601.0px;width:46.0px;height:41.7px;border-radius:7px;background:#00CFDD"></div><svg class="a" style="left:2049.2px;top:612.0px;" width="26.0" height="26.0" viewBox="0 0 24 24" fill="#fff"><path d="M19 4h-2V2h-2v2H9V2H7v2H5c-1.103 0-2 .897-2 2v14c0 1.103.897 2 2 2h14c1.103 0 2-.897 2-2V6c0-1.103-.897-2-2-2zM5 20V6h14l.002 14H5z"/><path d="M7 9h10v2H7zm0 4h5v2H7z"/></svg><div class="a" style="left:2090.0px;top:601.0px;width:44.8px;height:41.7px;border-radius:7px;background:#FDAC41"></div><svg class="a" style="left:2098.9px;top:611.5px;" width="26.0" height="26.0" viewBox="0 0 24 24" fill="#fff"><path d="M4 21a1 1 0 0 0 .24 0l4-1a1 1 0 0 0 .47-.26L21 7.41a2 2 0 0 0 0-2.820L19.420 3a2 2 0 0 0-2.830 0L4.300 15.290a1.060 1.060 0 0 0-.27.470l-1 4A1 1 0 0 0 3.760 21 1 1 0 0 0 4 21zM18 4.410 19.590 6 18 7.590 16.420 6zM5.910 16.510 15 7.410 16.590 9l-9.100 9.100-2.110.530z"/></svg><div class="a" style="left:2139.2px;top:601.0px;width:45.3px;height:41.7px;border-radius:7px;background:#FF5B5C"></div><svg class="a" style="left:2148.8px;top:609.2px;" width="26.0" height="26.0" viewBox="0 0 24 24" fill="#fff"><path d="M5 20a2 2 0 0 0 2 2h10a2 2 0 0 0 2-2V8h2V6h-4V4a2 2 0 0 0-2-2H9a2 2 0 0 0-2 2v2H3v2h2zM9 4h6v2H9zM8 8h9v12H7V8z"/><path d="M9 10h2v8H9zm4 0h2v8h-2z"/></svg><div class="a" style="left:448.0px;top:728.0px;width:1847.0px;height:1.4px;background:#E6E9EC;"></div><div class="a td" style="left:461.0px;top:681.0px;line-height:27px;font-size:18.2px;color:#2a2a2a;"><span style="letter-spacing:0.2px">4</span></div><div class="a td" style="left:598.0px;top:681.0px;line-height:27px;font-size:18.2px;color:#2a2a2a;">贵宾<span style="letter-spacing:0.2px">4</span></div><div class="a td" style="left:1083.0px;top:681.0px;line-height:27px;font-size:18.2px;color:#2a2a2a;"><span style="letter-spacing:0.2px">5</span></div><div class="a td" style="left:1435.0px;top:681.0px;line-height:27px;font-size:18.2px;color:#2a2a2a;"><span style="letter-spacing:0.2px">100</span></div><div class="a td" style="left:1612.0px;top:681.0px;line-height:27px;font-size:18.2px;color:#2a2a2a;"><span style="letter-spacing:0.2px">42</span>天</div><div class="a td" style="left:1838.0px;top:681.0px;line-height:27px;font-size:18.2px;color:#2a2a2a;">积极的</div><svg class="a" style="left:1246.0px;top:675.0px" width="56.0" height="37.0" viewBox="0 0 56 37"><defs><filter id="t3_b" x="-10%" y="-10%" width="120%" height="120%"><feGaussianBlur stdDeviation="0.85"/></filter><clipPath id="t3_c"><rect width="56" height="37"/></clipPath><linearGradient id="t3_g" x1="0" y1="0" x2="0" y2="1"><stop offset="0" stop-color="#48aa3a"/><stop offset="1" stop-color="#25761f"/></linearGradient></defs><g clip-path="url(#t3_c)"><g filter="url(#t3_b)"><rect x="-2" y="-2" width="60" height="18" fill="#e9eff6" opacity="1"/><ellipse cx="12" cy="1" rx="14" ry="3" fill="#4f7fc8" opacity="0.9"/><ellipse cx="33" cy="3" rx="6" ry="2" fill="#7fa4dc" opacity="0.7"/><ellipse cx="52" cy="2" rx="5" ry="2" fill="#5a6a8a" opacity="0.8"/><ellipse cx="10" cy="6" rx="5" ry="1.5" fill="#8aa8d8" opacity="0.6"/><rect x="-2" y="11" width="34" height="4.5" fill="#1e4a1c" opacity="1"/><rect x="30" y="12.5" width="28" height="3" fill="#2f6a28" opacity="0.8"/><rect x="-2" y="15" width="60" height="24" fill="url(#t3_g)" opacity="1"/><ellipse cx="28" cy="26" rx="8" ry="6" fill="#6cc25a" opacity="0.45"/><ellipse cx="17" cy="17.5" rx="7.5" ry="3.8" fill="#a85a28" opacity="1"/><ellipse cx="19" cy="18.5" rx="3.5" ry="2.5" fill="#efe8e0" opacity="1"/><ellipse cx="11.5" cy="15.5" rx="2.2" ry="2" fill="#a05020" opacity="1"/><rect x="13" y="20" width="1.5" height="5" fill="#e8e0d8" opacity="1"/><rect x="21.5" y="20" width="1.5" height="4" fill="#d8c8b8" opacity="1"/><ellipse cx="44" cy="18" rx="5.5" ry="6" fill="#8a3c12" opacity="1"/><ellipse cx="36.5" cy="14" rx="4.5" ry="8" fill="#a44c18" opacity="1"/><ellipse cx="36.5" cy="22" rx="4" ry="5" fill="#93400f" opacity="1"/><ellipse cx="29.5" cy="8.5" rx="2.5" ry="1.5" fill="#a85a28" opacity="1"/><ellipse cx="42" cy="8.5" rx="2.5" ry="1.5" fill="#a85a28" opacity="1"/><ellipse cx="36.5" cy="7.5" rx="1.6" ry="1.6" fill="#e8d8c8" opacity="0.8"/><rect x="33" y="25" width="2" height="9" fill="#f0ece6" opacity="1"/><rect x="37" y="27" width="2" height="7.5" fill="#f0ece6" opacity="1"/><rect x="45" y="23" width="1.6" height="5" fill="#7a3410" opacity="1"/><ellipse cx="53" cy="15.5" rx="2.5" ry="1.6" fill="#a05a28" opacity="1"/></g></g></svg><div class="a" style="left:2039.0px;top:672.0px;width:46.0px;height:41.7px;border-radius:7px;background:#00CFDD"></div><svg class="a" style="left:2049.2px;top:683.0px;" width="26.0" height="26.0" viewBox="0 0 24 24" fill="#fff"><path d="M19 4h-2V2h-2v2H9V2H7v2H5c-1.103 0-2 .897-2 2v14c0 1.103.897 2 2 2h14c1.103 0 2-.897 2-2V6c0-1.103-.897-2-2-2zM5 20V6h14l.002 14H5z"/><path d="M7 9h10v2H7zm0 4h5v2H7z"/></svg><div class="a" style="left:2090.0px;top:672.0px;width:44.8px;height:41.7px;border-radius:7px;background:#FDAC41"></div><svg class="a" style="left:2098.9px;top:682.5px;" width="26.0" height="26.0" viewBox="0 0 24 24" fill="#fff"><path d="M4 21a1 1 0 0 0 .24 0l4-1a1 1 0 0 0 .47-.26L21 7.41a2 2 0 0 0 0-2.820L19.420 3a2 2 0 0 0-2.830 0L4.300 15.290a1.060 1.060 0 0 0-.27.470l-1 4A1 1 0 0 0 3.760 21 1 1 0 0 0 4 21zM18 4.410 19.590 6 18 7.590 16.420 6zM5.910 16.510 15 7.410 16.590 9l-9.100 9.100-2.110.530z"/></svg><div class="a" style="left:2139.2px;top:672.0px;width:45.3px;height:41.7px;border-radius:7px;background:#FF5B5C"></div><svg class="a" style="left:2148.8px;top:680.2px;" width="26.0" height="26.0" viewBox="0 0 24 24" fill="#fff"><path d="M5 20a2 2 0 0 0 2 2h10a2 2 0 0 0 2-2V8h2V6h-4V4a2 2 0 0 0-2-2H9a2 2 0 0 0-2 2v2H3v2h2zM9 4h6v2H9zM8 8h9v12H7V8z"/><path d="M9 10h2v8H9zm4 0h2v8h-2z"/></svg><div class="a" style="left:448.0px;top:729.5px;width:1847.0px;height:70.5px;background:#FAFBFB;"></div><div class="a" style="left:448.0px;top:800.0px;width:1847.0px;height:1.4px;background:#E6E9EC;"></div><div class="a td" style="left:461.0px;top:752.5px;line-height:27px;font-size:18.2px;color:#2a2a2a;"><span style="letter-spacing:0.2px">5</span></div><div class="a td" style="left:598.0px;top:752.5px;line-height:27px;font-size:18.2px;color:#2a2a2a;">贵宾<span style="letter-spacing:0.2px">5</span></div><div class="a td" style="left:1083.0px;top:752.5px;line-height:27px;font-size:18.2px;color:#2a2a2a;"><span style="letter-spacing:0.2px">7</span></div><div class="a td" style="left:1435.0px;top:752.5px;line-height:27px;font-size:18.2px;color:#2a2a2a;"><span style="letter-spacing:0.2px">150</span></div><div class="a td" style="left:1612.0px;top:752.5px;line-height:27px;font-size:18.2px;color:#2a2a2a;"><span style="letter-spacing:0.2px">42</span>天</div><div class="a td" style="left:1838.0px;top:752.5px;line-height:27px;font-size:18.2px;color:#2a2a2a;">积极的</div><svg class="a" style="left:1246.0px;top:746.2px" width="56.0" height="37.5" viewBox="0 0 56 37.5"><defs><filter id="t4_b" x="-10%" y="-10%" width="120%" height="120%"><feGaussianBlur stdDeviation="0.8"/></filter><clipPath id="t4_c"><rect width="56" height="37.5"/></clipPath><linearGradient id="t4_s" x1="0" y1="0" x2="0" y2="1"><stop offset="0" stop-color="#74abe8"/><stop offset="1" stop-color="#d9ebf6"/></linearGradient><linearGradient id="t4_g" x1="0" y1="0" x2="0" y2="1"><stop offset="0" stop-color="#7ab030"/><stop offset="1" stop-color="#3c861c"/></linearGradient></defs><g clip-path="url(#t4_c)"><g filter="url(#t4_b)"><rect x="-2" y="-2" width="60" height="23" fill="url(#t4_s)" opacity="1"/><ellipse cx="12" cy="13" rx="6" ry="1" fill="#e8f2fa" opacity="0.7"/><ellipse cx="36" cy="12.5" rx="5" ry="1" fill="#e8f2fa" opacity="0.6"/><rect x="-2" y="20" width="60" height="1.5" fill="#4e6e54" opacity="1"/><rect x="-2" y="21" width="60" height="18" fill="url(#t4_g)" opacity="1"/><ellipse cx="10" cy="22.5" rx="4" ry="1.8" fill="#4a3020" opacity="1"/><ellipse cx="21" cy="22" rx="4.5" ry="2.8" fill="#7a4a32" opacity="1"/><ellipse cx="19.5" cy="21" rx="1.5" ry="2" fill="#e8e0d8" opacity="0.8"/><rect x="17.5" y="23" width="1.2" height="5" fill="#8a6a58" opacity="1"/><ellipse cx="35" cy="20" rx="7" ry="4.2" fill="#efebe4" opacity="1"/><ellipse cx="29" cy="17" rx="3.5" ry="3.2" fill="#f0ece6" opacity="1"/><ellipse cx="25" cy="15.5" rx="1.8" ry="1.2" fill="#5a3024" opacity="1"/><ellipse cx="32.5" cy="15.5" rx="1.8" ry="1.2" fill="#5a3024" opacity="1"/><ellipse cx="30.5" cy="22" rx="2.2" ry="2.2" fill="#6a3c28" opacity="1"/><rect x="29" y="23" width="1.8" height="7" fill="#ece6dc" opacity="1"/><rect x="39.5" y="23" width="1.8" height="6" fill="#e4dccc" opacity="1"/><rect x="33" y="23" width="1.5" height="5" fill="#d8d0c0" opacity="1"/><ellipse cx="47.5" cy="22.5" rx="2.5" ry="1.8" fill="#ece4dc" opacity="1"/><ellipse cx="49" cy="23.5" rx="1.3" ry="1.3" fill="#b07048" opacity="1"/></g></g></svg><div class="a" style="left:2039.0px;top:743.5px;width:46.0px;height:41.7px;border-radius:7px;background:#00CFDD"></div><svg class="a" style="left:2049.2px;top:754.5px;" width="26.0" height="26.0" viewBox="0 0 24 24" fill="#fff"><path d="M19 4h-2V2h-2v2H9V2H7v2H5c-1.103 0-2 .897-2 2v14c0 1.103.897 2 2 2h14c1.103 0 2-.897 2-2V6c0-1.103-.897-2-2-2zM5 20V6h14l.002 14H5z"/><path d="M7 9h10v2H7zm0 4h5v2H7z"/></svg><div class="a" style="left:2090.0px;top:743.5px;width:44.8px;height:41.7px;border-radius:7px;background:#FDAC41"></div><svg class="a" style="left:2098.9px;top:754.0px;" width="26.0" height="26.0" viewBox="0 0 24 24" fill="#fff"><path d="M4 21a1 1 0 0 0 .24 0l4-1a1 1 0 0 0 .47-.26L21 7.41a2 2 0 0 0 0-2.820L19.420 3a2 2 0 0 0-2.830 0L4.300 15.290a1.060 1.060 0 0 0-.27.470l-1 4A1 1 0 0 0 3.760 21 1 1 0 0 0 4 21zM18 4.410 19.590 6 18 7.590 16.420 6zM5.910 16.510 15 7.410 16.590 9l-9.100 9.100-2.110.530z"/></svg><div class="a" style="left:2139.2px;top:743.5px;width:45.3px;height:41.7px;border-radius:7px;background:#FF5B5C"></div><svg class="a" style="left:2148.8px;top:751.8px;" width="26.0" height="26.0" viewBox="0 0 24 24" fill="#fff"><path d="M5 20a2 2 0 0 0 2 2h10a2 2 0 0 0 2-2V8h2V6h-4V4a2 2 0 0 0-2-2H9a2 2 0 0 0-2 2v2H3v2h2zM9 4h6v2H9zM8 8h9v12H7V8z"/><path d="M9 10h2v8H9zm4 0h2v8h-2z"/></svg><div class="a" style="left:448.0px;top:871.0px;width:1847.0px;height:1.4px;background:#E6E9EC;"></div><div class="a td" style="left:461.0px;top:823.7px;line-height:27px;font-size:18.2px;color:#2a2a2a;"><span style="letter-spacing:0.2px">6</span></div><div class="a td" style="left:598.0px;top:823.7px;line-height:27px;font-size:18.2px;color:#2a2a2a;">贵宾<span style="letter-spacing:0.2px">6</span></div><div class="a td" style="left:1083.0px;top:823.7px;line-height:27px;font-size:18.2px;color:#2a2a2a;"><span style="letter-spacing:0.2px">8</span></div><div class="a td" style="left:1435.0px;top:823.7px;line-height:27px;font-size:18.2px;color:#2a2a2a;"><span style="letter-spacing:0.2px">200</span></div><div class="a td" style="left:1612.0px;top:823.7px;line-height:27px;font-size:18.2px;color:#2a2a2a;"><span style="letter-spacing:0.2px">42</span>天</div><div class="a td" style="left:1838.0px;top:823.7px;line-height:27px;font-size:18.2px;color:#2a2a2a;">积极的</div><svg class="a" style="left:1246.0px;top:817.9px" width="56.0" height="37.0" viewBox="0 0 56 37"><defs><filter id="t5_b" x="-10%" y="-10%" width="120%" height="120%"><feGaussianBlur stdDeviation="0.85"/></filter><clipPath id="t5_c"><rect width="56" height="37"/></clipPath><linearGradient id="t5_g" x1="0" y1="0" x2="0" y2="1"><stop offset="0" stop-color="#f9fcf9"/><stop offset="0.5" stop-color="#f4f8f0"/><stop offset="0.56" stop-color="#dcdc98"/><stop offset="0.7" stop-color="#c4dc50"/><stop offset="1" stop-color="#9fd41c"/></linearGradient></defs><g clip-path="url(#t5_c)"><g filter="url(#t5_b)"><rect x="-2" y="-2" width="60" height="42" fill="url(#t5_g)" opacity="1"/><ellipse cx="33" cy="14" rx="5.5" ry="11" fill="#6cb33c" opacity="0.85"/><ellipse cx="52" cy="19" rx="4" ry="3" fill="#7aa860" opacity="0.6"/><ellipse cx="2" cy="21" rx="3" ry="2" fill="#8ab070" opacity="0.5"/><ellipse cx="45" cy="25" rx="5.5" ry="13" fill="#f2eee6" opacity="1"/><ellipse cx="46" cy="15" rx="3.5" ry="5" fill="#f4f0ea" opacity="1"/><ellipse cx="41.5" cy="11" rx="2" ry="1.2" fill="#b8845a" opacity="1"/><ellipse cx="51" cy="11" rx="2" ry="1.2" fill="#b8845a" opacity="1"/><ellipse cx="42" cy="22" rx="2.2" ry="4" fill="#a85a30" opacity="1"/><ellipse cx="48.5" cy="22" rx="1.5" ry="3" fill="#b87048" opacity="0.8"/><ellipse cx="17" cy="26" rx="13.5" ry="16" fill="#0c0c10" opacity="1"/><ellipse cx="8" cy="7.5" rx="5.5" ry="3.5" fill="#0e0e12" opacity="1"/><ellipse cx="33" cy="8" rx="5.5" ry="3.5" fill="#0e0e12" opacity="1"/><ellipse cx="20" cy="12" rx="9.5" ry="9" fill="#0d0d11" opacity="1"/><ellipse cx="20.5" cy="5" rx="5.5" ry="3.2" fill="#eeeeec" opacity="1"/><ellipse cx="19.5" cy="13" rx="1.7" ry="7" fill="#e6e5e2" opacity="1"/><ellipse cx="8.5" cy="9.5" rx="1.6" ry="1.5" fill="#ecca1c" opacity="1"/><ellipse cx="34.5" cy="8.5" rx="1.3" ry="1.5" fill="#e4c21c" opacity="1"/><ellipse cx="15.5" cy="22.5" rx="2" ry="1.3" fill="#e8b8a0" opacity="1"/><ellipse cx="19" cy="27.5" rx="5" ry="1.2" fill="#8a8a88" opacity="0.7"/><ellipse cx="27" cy="14" rx="4" ry="7" fill="#101014" opacity="1"/><ellipse cx="12" cy="15" rx="3.5" ry="7" fill="#16161a" opacity="1"/></g></g></svg><div class="a" style="left:2039.0px;top:814.8px;width:46.0px;height:41.7px;border-radius:7px;background:#00CFDD"></div><svg class="a" style="left:2049.2px;top:825.8px;" width="26.0" height="26.0" viewBox="0 0 24 24" fill="#fff"><path d="M19 4h-2V2h-2v2H9V2H7v2H5c-1.103 0-2 .897-2 2v14c0 1.103.897 2 2 2h14c1.103 0 2-.897 2-2V6c0-1.103-.897-2-2-2zM5 20V6h14l.002 14H5z"/><path d="M7 9h10v2H7zm0 4h5v2H7z"/></svg><div class="a" style="left:2090.0px;top:814.8px;width:44.8px;height:41.7px;border-radius:7px;background:#FDAC41"></div><svg class="a" style="left:2098.9px;top:825.3px;" width="26.0" height="26.0" viewBox="0 0 24 24" fill="#fff"><path d="M4 21a1 1 0 0 0 .24 0l4-1a1 1 0 0 0 .47-.26L21 7.41a2 2 0 0 0 0-2.820L19.420 3a2 2 0 0 0-2.830 0L4.300 15.290a1.060 1.060 0 0 0-.27.470l-1 4A1 1 0 0 0 3.760 21 1 1 0 0 0 4 21zM18 4.410 19.590 6 18 7.590 16.420 6zM5.910 16.510 15 7.410 16.590 9l-9.100 9.100-2.110.530z"/></svg><div class="a" style="left:2139.2px;top:814.8px;width:45.3px;height:41.7px;border-radius:7px;background:#FF5B5C"></div><svg class="a" style="left:2148.8px;top:823.0px;" width="26.0" height="26.0" viewBox="0 0 24 24" fill="#fff"><path d="M5 20a2 2 0 0 0 2 2h10a2 2 0 0 0 2-2V8h2V6h-4V4a2 2 0 0 0-2-2H9a2 2 0 0 0-2 2v2H3v2h2zM9 4h6v2H9zM8 8h9v12H7V8z"/><path d="M9 10h2v8H9zm4 0h2v8h-2z"/></svg><div class="a" style="left:448.0px;top:872.5px;width:1847.0px;height:73.5px;background:#FAFBFB;"></div><div class="a" style="left:448.0px;top:946.0px;width:1847.0px;height:1.4px;background:#E6E9EC;"></div><div class="a td" style="left:461.0px;top:897.0px;line-height:27px;font-size:18.2px;color:#2a2a2a;"><span style="letter-spacing:0.2px">7</span></div><div class="a td" style="left:598.0px;top:897.0px;line-height:27px;font-size:18.2px;color:#2a2a2a;">贵宾 <span style="letter-spacing:0.2px">7</span></div><div class="a td" style="left:1083.0px;top:897.0px;line-height:27px;font-size:18.2px;color:#2a2a2a;"><span style="letter-spacing:0.2px">14</span></div><div class="a td" style="left:1435.0px;top:897.0px;line-height:27px;font-size:18.2px;color:#2a2a2a;"><span style="letter-spacing:0.2px">300</span></div><div class="a td" style="left:1612.0px;top:897.0px;line-height:27px;font-size:18.2px;color:#2a2a2a;"><span style="letter-spacing:0.2px">42</span>天</div><div class="a td" style="left:1838.0px;top:897.0px;line-height:27px;font-size:18.2px;color:#2a2a2a;">积极的</div><svg class="a" style="left:1246.0px;top:885.9px" width="56.0" height="46.0" viewBox="0 0 56 46"><defs><filter id="t6_b" x="-10%" y="-10%" width="120%" height="120%"><feGaussianBlur stdDeviation="0.9"/></filter><clipPath id="t6_c"><rect width="56" height="46"/></clipPath><linearGradient id="t6_s" x1="0" y1="0" x2="0" y2="1"><stop offset="0" stop-color="#0b449c"/><stop offset="0.45" stop-color="#2f7fdc"/><stop offset="1" stop-color="#a9d2f2"/></linearGradient><linearGradient id="t6_g" x1="0" y1="0" x2="0" y2="1"><stop offset="0" stop-color="#4fb62c"/><stop offset="1" stop-color="#2c881c"/></linearGradient></defs><g clip-path="url(#t6_c)"><g filter="url(#t6_b)"><rect x="-2" y="-2" width="60" height="33" fill="url(#t6_s)" opacity="1"/><ellipse cx="22" cy="1.5" rx="6" ry="1.8" fill="#ffffff" opacity="0.9"/><ellipse cx="31" cy="2.5" rx="5" ry="2" fill="#ffffff" opacity="0.9"/><ellipse cx="44" cy="2.5" rx="4" ry="2.3" fill="#ffffff" opacity="0.95"/><ellipse cx="52" cy="1.5" rx="3" ry="1.2" fill="#ffffff" opacity="0.8"/><ellipse cx="3" cy="6.5" rx="5" ry="2.3" fill="#ffffff" opacity="0.95"/><ellipse cx="8" cy="8.5" rx="4" ry="1.5" fill="#ffffff" opacity="0.7"/><ellipse cx="12" cy="13.5" rx="8" ry="2.3" fill="#ffffff" opacity="1"/><ellipse cx="22" cy="14.5" rx="5" ry="1.8" fill="#ffffff" opacity="0.9"/><ellipse cx="6" cy="12" rx="4" ry="1.5" fill="#ffffff" opacity="0.8"/><ellipse cx="40" cy="13.5" rx="7" ry="2.3" fill="#ffffff" opacity="1"/><ellipse cx="48" cy="10.5" rx="6" ry="2.3" fill="#ffffff" opacity="0.95"/><ellipse cx="54" cy="7.5" rx="3" ry="2" fill="#ffffff" opacity="0.9"/><ellipse cx="34" cy="25" rx="9" ry="1.5" fill="#ffffff" opacity="0.8"/><ellipse cx="44" cy="23.5" rx="5" ry="1.2" fill="#ffffff" opacity="0.6"/><ellipse cx="5" cy="26" rx="6" ry="1.3" fill="#ffffff" opacity="0.7"/><ellipse cx="14" cy="24" rx="5" ry="1" fill="#ffffff" opacity="0.5"/><ellipse cx="32" cy="18" rx="4" ry="6" fill="#ffffff" opacity="0.3"/><ellipse cx="27" cy="21" rx="8" ry="2" fill="#ffffff" opacity="0.3"/><ellipse cx="38" cy="20" rx="5" ry="2.5" fill="#ffffff" opacity="0.25"/><ellipse cx="17" cy="19" rx="6" ry="1.5" fill="#ffffff" opacity="0.3"/><rect x="-2" y="29.3" width="60" height="1.8" fill="#2a5c2c" opacity="1"/><rect x="-2" y="30.8" width="60" height="17" fill="url(#t6_g)" opacity="1"/><ellipse cx="20" cy="34.5" rx="2.2" ry="1.1" fill="#a45a28" opacity="1"/><ellipse cx="14" cy="33.5" rx="1.2" ry="0.8" fill="#b86a38" opacity="1"/><ellipse cx="31.5" cy="33.5" rx="2.5" ry="1" fill="#2a2a2a" opacity="1"/><ellipse cx="35" cy="34" rx="1.2" ry="0.9" fill="#d8b8a0" opacity="1"/><ellipse cx="47" cy="33.5" rx="1.3" ry="1" fill="#2a2a2a" opacity="1"/><ellipse cx="8.5" cy="33.5" rx="1.5" ry="0.7" fill="#d8d8d0" opacity="1"/><ellipse cx="27.5" cy="33.5" rx="1" ry="0.8" fill="#e8e8e0" opacity="1"/><ellipse cx="52" cy="33" rx="1" ry="0.7" fill="#c8c8c0" opacity="1"/></g></g></svg><div class="a" style="left:2039.0px;top:888.0px;width:46.0px;height:41.7px;border-radius:7px;background:#00CFDD"></div><svg class="a" style="left:2049.2px;top:899.0px;" width="26.0" height="26.0" viewBox="0 0 24 24" fill="#fff"><path d="M19 4h-2V2h-2v2H9V2H7v2H5c-1.103 0-2 .897-2 2v14c0 1.103.897 2 2 2h14c1.103 0 2-.897 2-2V6c0-1.103-.897-2-2-2zM5 20V6h14l.002 14H5z"/><path d="M7 9h10v2H7zm0 4h5v2H7z"/></svg><div class="a" style="left:2090.0px;top:888.0px;width:44.8px;height:41.7px;border-radius:7px;background:#FDAC41"></div><svg class="a" style="left:2098.9px;top:898.5px;" width="26.0" height="26.0" viewBox="0 0 24 24" fill="#fff"><path d="M4 21a1 1 0 0 0 .24 0l4-1a1 1 0 0 0 .47-.26L21 7.41a2 2 0 0 0 0-2.820L19.420 3a2 2 0 0 0-2.830 0L4.300 15.290a1.060 1.060 0 0 0-.27.470l-1 4A1 1 0 0 0 3.760 21 1 1 0 0 0 4 21zM18 4.410 19.590 6 18 7.590 16.420 6zM5.910 16.510 15 7.410 16.590 9l-9.100 9.100-2.110.530z"/></svg><div class="a" style="left:2139.2px;top:888.0px;width:45.3px;height:41.7px;border-radius:7px;background:#FF5B5C"></div><svg class="a" style="left:2148.8px;top:896.2px;" width="26.0" height="26.0" viewBox="0 0 24 24" fill="#fff"><path d="M5 20a2 2 0 0 0 2 2h10a2 2 0 0 0 2-2V8h2V6h-4V4a2 2 0 0 0-2-2H9a2 2 0 0 0-2 2v2H3v2h2zM9 4h6v2H9zM8 8h9v12H7V8z"/><path d="M9 10h2v8H9zm4 0h2v8h-2z"/></svg><div class="a" style="left:448.0px;top:1017.0px;width:1847.0px;height:1.4px;background:#E6E9EC;"></div><div class="a td" style="left:461.0px;top:970.0px;line-height:27px;font-size:18.2px;color:#2a2a2a;"><span style="letter-spacing:0.2px">8</span></div><div class="a td" style="left:598.0px;top:970.0px;line-height:27px;font-size:18.2px;color:#2a2a2a;">贵宾 <span style="letter-spacing:0.2px">8</span></div><div class="a td" style="left:1083.0px;top:970.0px;line-height:27px;font-size:18.2px;color:#2a2a2a;"><span style="letter-spacing:0.2px">18</span></div><div class="a td" style="left:1435.0px;top:970.0px;line-height:27px;font-size:18.2px;color:#2a2a2a;"><span style="letter-spacing:0.2px">500</span></div><div class="a td" style="left:1612.0px;top:970.0px;line-height:27px;font-size:18.2px;color:#2a2a2a;"><span style="letter-spacing:0.2px">42</span>天</div><div class="a td" style="left:1838.0px;top:970.0px;line-height:27px;font-size:18.2px;color:#2a2a2a;">积极的</div><svg class="a" style="left:1246.0px;top:964.0px" width="56.0" height="37.5" viewBox="0 0 56 37.5"><defs><filter id="t7_b" x="-10%" y="-10%" width="120%" height="120%"><feGaussianBlur stdDeviation="0.85"/></filter><clipPath id="t7_c"><rect width="56" height="37.5"/></clipPath><linearGradient id="t7_s" x1="0" y1="0" x2="0" y2="1"><stop offset="0" stop-color="#142f70"/><stop offset="0.5" stop-color="#5f84bc"/><stop offset="1" stop-color="#a4bedd"/></linearGradient><linearGradient id="t7_g" x1="0" y1="0" x2="0" y2="1"><stop offset="0" stop-color="#63a038"/><stop offset="0.6" stop-color="#4e9028"/><stop offset="1" stop-color="#3a7a1e"/></linearGradient><radialGradient id="t7_r" cx="1" cy="0.05" r="0.55"><stop offset="0" stop-color="#fdfee6"/><stop offset="0.35" stop-color="#e6efe0" stop-opacity="0.8"/><stop offset="1" stop-color="#a4bedd" stop-opacity="0"/></radialGradient></defs><g clip-path="url(#t7_c)"><g filter="url(#t7_b)"><rect x="-2" y="-2" width="60" height="26" fill="url(#t7_s)" opacity="1"/><rect x="-2" y="-2" width="60" height="40" fill="url(#t7_r)" opacity="1"/><rect x="-2" y="20.5" width="22" height="2.5" fill="#4a6a54" opacity="0.7"/><ellipse cx="53" cy="20" rx="4" ry="2.5" fill="#4e7a50" opacity="0.8"/><rect x="-2" y="22.5" width="60" height="17" fill="url(#t7_g)" opacity="1"/><ellipse cx="40" cy="30" rx="16" ry="4" fill="#9ab04a" opacity="0.35"/><ellipse cx="2" cy="20" rx="2.5" ry="3" fill="#e8e6e0" opacity="1"/><ellipse cx="11" cy="23.5" rx="2" ry="1.5" fill="#d8d0c8" opacity="0.8"/><ellipse cx="29" cy="23.5" rx="2" ry="1.3" fill="#d8d0c8" opacity="0.8"/><ellipse cx="18" cy="15.5" rx="6.5" ry="6" fill="#5a2418" opacity="1"/><ellipse cx="19.5" cy="12" rx="2.2" ry="3" fill="#ece6e0" opacity="1"/><polygon points="21,12 25,16 26.500,27 23.500,27 21,20" fill="#6a2a1a" opacity="1"/><rect x="13.5" y="20" width="1.6" height="7" fill="#d8d0c8" opacity="1"/><rect x="16.5" y="21" width="1.5" height="6" fill="#4a2014" opacity="1"/><ellipse cx="40" cy="19" rx="8.5" ry="3.2" fill="#b87a42" opacity="1"/><ellipse cx="37" cy="19" rx="3" ry="2.8" fill="#ece4dc" opacity="1"/><ellipse cx="44" cy="19.5" rx="2" ry="2" fill="#eee6de" opacity="0.9"/><ellipse cx="32.5" cy="18" rx="1.8" ry="2.2" fill="#e8e0d8" opacity="1"/><ellipse cx="48" cy="19" rx="1.8" ry="2" fill="#b06a38" opacity="1"/><rect x="33" y="21" width="1.3" height="4" fill="#e0d8d0" opacity="1"/><rect x="43" y="21" width="1.3" height="4" fill="#d8c8b8" opacity="1"/><rect x="38" y="21" width="1.2" height="3.5" fill="#c8b8a8" opacity="1"/></g></g></svg><div class="a" style="left:2039.0px;top:961.0px;width:46.0px;height:41.7px;border-radius:7px;background:#00CFDD"></div><svg class="a" style="left:2049.2px;top:972.0px;" width="26.0" height="26.0" viewBox="0 0 24 24" fill="#fff"><path d="M19 4h-2V2h-2v2H9V2H7v2H5c-1.103 0-2 .897-2 2v14c0 1.103.897 2 2 2h14c1.103 0 2-.897 2-2V6c0-1.103-.897-2-2-2zM5 20V6h14l.002 14H5z"/><path d="M7 9h10v2H7zm0 4h5v2H7z"/></svg><div class="a" style="left:2090.0px;top:961.0px;width:44.8px;height:41.7px;border-radius:7px;background:#FDAC41"></div><svg class="a" style="left:2098.9px;top:971.5px;" width="26.0" height="26.0" viewBox="0 0 24 24" fill="#fff"><path d="M4 21a1 1 0 0 0 .24 0l4-1a1 1 0 0 0 .47-.26L21 7.41a2 2 0 0 0 0-2.820L19.420 3a2 2 0 0 0-2.830 0L4.300 15.290a1.060 1.060 0 0 0-.27.470l-1 4A1 1 0 0 0 3.760 21 1 1 0 0 0 4 21zM18 4.410 19.590 6 18 7.590 16.420 6zM5.910 16.510 15 7.410 16.590 9l-9.100 9.100-2.110.530z"/></svg><div class="a" style="left:2139.2px;top:961.0px;width:45.3px;height:41.7px;border-radius:7px;background:#FF5B5C"></div><svg class="a" style="left:2148.8px;top:969.2px;" width="26.0" height="26.0" viewBox="0 0 24 24" fill="#fff"><path d="M5 20a2 2 0 0 0 2 2h10a2 2 0 0 0 2-2V8h2V6h-4V4a2 2 0 0 0-2-2H9a2 2 0 0 0-2 2v2H3v2h2zM9 4h6v2H9zM8 8h9v12H7V8z"/><path d="M9 10h2v8H9zm4 0h2v8h-2z"/></svg><div class="a" style="left:448.0px;top:1018.5px;width:1847.0px;height:70.5px;background:#FAFBFB;"></div><div class="a" style="left:448.0px;top:1089.0px;width:1847.0px;height:1.4px;background:#E6E9EC;"></div><div class="a td" style="left:461.0px;top:1041.5px;line-height:27px;font-size:18.2px;color:#2a2a2a;"><span style="letter-spacing:0.2px">9</span></div><div class="a td" style="left:598.0px;top:1041.5px;line-height:27px;font-size:18.2px;color:#2a2a2a;">贵宾<span style="letter-spacing:0.2px">9</span></div><div class="a td" style="left:1083.0px;top:1041.5px;line-height:27px;font-size:18.2px;color:#2a2a2a;">二十五</div><div class="a td" style="left:1435.0px;top:1041.5px;line-height:27px;font-size:18.2px;color:#2a2a2a;"><span style="letter-spacing:0.2px">700</span></div><div class="a td" style="left:1612.0px;top:1041.5px;line-height:27px;font-size:18.2px;color:#2a2a2a;"><span style="letter-spacing:0.2px">42</span>天</div><div class="a td" style="left:1838.0px;top:1041.5px;line-height:27px;font-size:18.2px;color:#2a2a2a;">积极的</div><svg class="a" style="left:1246.0px;top:1035.0px" width="56.0" height="37.5" viewBox="0 0 56 37.5"><defs><filter id="t8_b" x="-10%" y="-10%" width="120%" height="120%"><feGaussianBlur stdDeviation="0.8"/></filter><clipPath id="t8_c"><rect width="56" height="37.5"/></clipPath><linearGradient id="t8_g" x1="0" y1="0" x2="0" y2="1"><stop offset="0" stop-color="#f3efe8"/><stop offset="0.38" stop-color="#f4ead8"/><stop offset="0.48" stop-color="#eeb05a"/><stop offset="0.58" stop-color="#b85c1a"/><stop offset="1" stop-color="#7a300e"/></linearGradient></defs><g clip-path="url(#t8_c)"><g filter="url(#t8_b)"><rect x="-2" y="-2" width="60" height="42" fill="url(#t8_g)" opacity="1"/><ellipse cx="10" cy="17" rx="13" ry="2.5" fill="#f09a24" opacity="0.95"/><ellipse cx="12" cy="19.5" rx="12" ry="1.2" fill="#f4e4c8" opacity="0.8"/><ellipse cx="51" cy="25" rx="6" ry="8" fill="#c8b41e" opacity="0.9"/><ellipse cx="53" cy="17.5" rx="3" ry="2" fill="#8a6a30" opacity="0.7"/><ellipse cx="28" cy="33" rx="22" ry="4" fill="#7a3410" opacity="0.6"/><ellipse cx="36" cy="15" rx="7" ry="5.5" fill="#5a2a18" opacity="1"/><ellipse cx="27.5" cy="14" rx="2.8" ry="4.5" fill="#ece4d8" opacity="1"/><ellipse cx="31" cy="12.5" rx="2.5" ry="3" fill="#7a3c20" opacity="1"/><ellipse cx="34" cy="16.5" rx="3" ry="2.5" fill="#e8e0d4" opacity="0.9"/><polygon points="39,19 43,19 43,28 40,28" fill="#3a160c" opacity="1"/><ellipse cx="49" cy="17" rx="3" ry="3" fill="#d8d0c4" opacity="0.9"/><ellipse cx="50.5" cy="19.5" rx="1.5" ry="2" fill="#2a2420" opacity="1"/><rect x="26" y="18" width="1.3" height="9" fill="#e8dccc" opacity="0.9"/><rect x="32" y="19" width="1.3" height="8" fill="#e0d0bc" opacity="0.9"/><polygon points="4,0 12,0 45,11 44,13.500 30,9" fill="#8d8d94" opacity="1"/><polygon points="4,0 8,0 40,11 38,11.500" fill="#b5b5ba" opacity="0.9"/><polygon points="36,0 39,0 48,7.500 46.500,9" fill="#c27a3e" opacity="1"/><polygon points="0,25 34,20 34,22.500 0,29.500" fill="#a3a8ae" opacity="1"/><polygon points="0,25 34,20 34,21 0,26.500" fill="#c6cace" opacity="0.9"/><polygon points="36.500,0 38.800,0 37.800,32 35.500,32" fill="#a0a0a6" opacity="1"/><polygon points="45,6 46.800,6 46.300,27 44.500,27" fill="#9a9aa0" opacity="1"/></g></g></svg><div class="a" style="left:2039.0px;top:1032.5px;width:46.0px;height:41.7px;border-radius:7px;background:#00CFDD"></div><svg class="a" style="left:2049.2px;top:1043.5px;" width="26.0" height="26.0" viewBox="0 0 24 24" fill="#fff"><path d="M19 4h-2V2h-2v2H9V2H7v2H5c-1.103 0-2 .897-2 2v14c0 1.103.897 2 2 2h14c1.103 0 2-.897 2-2V6c0-1.103-.897-2-2-2zM5 20V6h14l.002 14H5z"/><path d="M7 9h10v2H7zm0 4h5v2H7z"/></svg><div class="a" style="left:2090.0px;top:1032.5px;width:44.8px;height:41.7px;border-radius:7px;background:#FDAC41"></div><svg class="a" style="left:2098.9px;top:1043.0px;" width="26.0" height="26.0" viewBox="0 0 24 24" fill="#fff"><path d="M4 21a1 1 0 0 0 .24 0l4-1a1 1 0 0 0 .47-.26L21 7.41a2 2 0 0 0 0-2.820L19.420 3a2 2 0 0 0-2.830 0L4.300 15.290a1.060 1.060 0 0 0-.27.470l-1 4A1 1 0 0 0 3.760 21 1 1 0 0 0 4 21zM18 4.410 19.590 6 18 7.590 16.420 6zM5.910 16.510 15 7.410 16.590 9l-9.100 9.100-2.110.530z"/></svg><div class="a" style="left:2139.2px;top:1032.5px;width:45.3px;height:41.7px;border-radius:7px;background:#FF5B5C"></div><svg class="a" style="left:2148.8px;top:1040.8px;" width="26.0" height="26.0" viewBox="0 0 24 24" fill="#fff"><path d="M5 20a2 2 0 0 0 2 2h10a2 2 0 0 0 2-2V8h2V6h-4V4a2 2 0 0 0-2-2H9a2 2 0 0 0-2 2v2H3v2h2zM9 4h6v2H9zM8 8h9v12H7V8z"/><path d="M9 10h2v8H9zm4 0h2v8h-2z"/></svg><div class="a td" style="left:461.0px;top:1113.0px;line-height:27px;font-size:18.2px;color:#2a2a2a;"><span style="letter-spacing:0.2px">10</span></div><div class="a td" style="left:598.0px;top:1113.0px;line-height:27px;font-size:18.2px;color:#2a2a2a;">贵宾 <span style="letter-spacing:0.2px">10</span></div><div class="a td" style="left:1083.0px;top:1113.0px;line-height:27px;font-size:18.2px;color:#2a2a2a;">三十二</div><div class="a td" style="left:1435.0px;top:1113.0px;line-height:27px;font-size:18.2px;color:#2a2a2a;"><span style="letter-spacing:0.2px">1000</span></div><div class="a td" style="left:1612.0px;top:1113.0px;line-height:27px;font-size:18.2px;color:#2a2a2a;"><span style="letter-spacing:0.2px">42</span>天</div><div class="a td" style="left:1838.0px;top:1113.0px;line-height:27px;font-size:18.2px;color:#2a2a2a;">积极的</div><svg class="a" style="left:1246.0px;top:1106.8px" width="56.0" height="36.5" viewBox="0 0 56 36.5"><defs><filter id="t9_b" x="-10%" y="-10%" width="120%" height="120%"><feGaussianBlur stdDeviation="0.85"/></filter><clipPath id="t9_c"><rect width="56" height="36.5"/></clipPath><linearGradient id="t9_g" x1="0" y1="0" x2="0" y2="1"><stop offset="0" stop-color="#c9921c"/><stop offset="0.2" stop-color="#8a6a22"/><stop offset="0.32" stop-color="#2a2418"/><stop offset="1" stop-color="#0e0c12"/></linearGradient></defs><g clip-path="url(#t9_c)"><g filter="url(#t9_b)"><rect x="-2" y="-2" width="60" height="42" fill="url(#t9_g)" opacity="1"/><ellipse cx="16" cy="3" rx="5" ry="3.5" fill="#fff2a0" opacity="1"/><ellipse cx="16" cy="3" rx="9" ry="5" fill="#f5c030" opacity="0.6"/><ellipse cx="5" cy="9" rx="7" ry="5" fill="#1c1a10" opacity="1"/><rect x="11" y="12" width="13" height="6" fill="#5aa52c" opacity="1"/><rect x="11" y="16" width="13" height="2" fill="#3c7a20" opacity="1"/><polygon points="0,18 34,17 34,24 0,30" fill="#2e2226" opacity="1"/><ellipse cx="26" cy="9" rx="4" ry="6" fill="#5a4a40" opacity="1"/><ellipse cx="25.5" cy="14" rx="2.2" ry="6" fill="#c8b8a8" opacity="0.9"/><rect x="23" y="18" width="5" height="7" fill="#8a7a70" opacity="0.8"/><ellipse cx="40" cy="11" rx="9" ry="8" fill="#1a181c" opacity="1"/><ellipse cx="37" cy="18" rx="2.6" ry="9" fill="#ece0d6" opacity="1"/><ellipse cx="37" cy="27" rx="2.2" ry="2" fill="#d8a8a0" opacity="1"/><ellipse cx="52" cy="8" rx="6" ry="9" fill="#2a262a" opacity="1"/><ellipse cx="50" cy="12" rx="3" ry="5" fill="#b8b0a8" opacity="0.8"/><ellipse cx="54" cy="3" rx="3" ry="2.5" fill="#1a1416" opacity="1"/><ellipse cx="3" cy="16" rx="2.5" ry="6" fill="#8a8a90" opacity="0.8"/><polygon points="4,30.500 34,21.500 34.500,24 7,33.500" fill="#8f9cab" opacity="1"/><polygon points="4,30.500 7,33.500 9,37 5,37" fill="#6a7480" opacity="1"/><polygon points="8,34 34,24.500 56,26 56,37 9,37" fill="#232830" opacity="1"/><ellipse cx="30" cy="32" rx="5" ry="3" fill="#5a6468" opacity="0.7"/><ellipse cx="44" cy="31" rx="5" ry="3" fill="#4a4a3a" opacity="0.7"/><ellipse cx="37" cy="33" rx="1.5" ry="3" fill="#b8a8a0" opacity="0.6"/><line x1="34" y1="22.5" x2="56" y2="26" stroke="#6a7684" stroke-width="1.2" opacity="1"/><line x1="56" y1="27" x2="48" y2="37" stroke="#8f9cab" stroke-width="1.6" opacity="1"/></g></g></svg><div class="a" style="left:2039.0px;top:1104.0px;width:46.0px;height:41.7px;border-radius:7px;background:#00CFDD"></div><svg class="a" style="left:2049.2px;top:1115.0px;" width="26.0" height="26.0" viewBox="0 0 24 24" fill="#fff"><path d="M19 4h-2V2h-2v2H9V2H7v2H5c-1.103 0-2 .897-2 2v14c0 1.103.897 2 2 2h14c1.103 0 2-.897 2-2V6c0-1.103-.897-2-2-2zM5 20V6h14l.002 14H5z"/><path d="M7 9h10v2H7zm0 4h5v2H7z"/></svg><div class="a" style="left:2090.0px;top:1104.0px;width:44.8px;height:41.7px;border-radius:7px;background:#FDAC41"></div><svg class="a" style="left:2098.9px;top:1114.5px;" width="26.0" height="26.0" viewBox="0 0 24 24" fill="#fff"><path d="M4 21a1 1 0 0 0 .24 0l4-1a1 1 0 0 0 .47-.26L21 7.41a2 2 0 0 0 0-2.820L19.420 3a2 2 0 0 0-2.830 0L4.300 15.290a1.060 1.060 0 0 0-.27.470l-1 4A1 1 0 0 0 3.760 21 1 1 0 0 0 4 21zM18 4.410 19.590 6 18 7.590 16.420 6zM5.910 16.510 15 7.410 16.590 9l-9.100 9.100-2.110.530z"/></svg><div class="a" style="left:2139.2px;top:1104.0px;width:45.3px;height:41.7px;border-radius:7px;background:#FF5B5C"></div><svg class="a" style="left:2148.8px;top:1112.2px;" width="26.0" height="26.0" viewBox="0 0 24 24" fill="#fff"><path d="M5 20a2 2 0 0 0 2 2h10a2 2 0 0 0 2-2V8h2V6h-4V4a2 2 0 0 0-2-2H9a2 2 0 0 0-2 2v2H3v2h2zM9 4h6v2H9zM8 8h9v12H7V8z"/><path d="M9 10h2v8H9zm4 0h2v8h-2z"/></svg><div class="a " style="left:448.0px;top:1177.0px;line-height:32px;font-size:21.0px;color:#8795A5;">显示 <span style="letter-spacing:0.6px">1</span> 至 <span style="letter-spacing:0.6px">10</span> 条，共 <span style="letter-spacing:0.6px">10</span> 条</div><div class="a" style="left:2058.5px;top:1210.8px;width:88px;height:46.2px;border-radius:6px;background:#F2F4F4;border:1px solid #E9ECEE;box-sizing:border-box"></div><div class="a " style="left:2071.0px;top:1218.5px;line-height:32px;font-size:21.0px;color:#8090A4;font-weight:600;">以前的</div><div class="a" style="left:2155px;top:1211.2px;width:43.7px;height:45.8px;border-radius:5px;background:#5A8DEE;color:#fff;font-size:21px;line-height:46px;text-align:center;font-weight:700">1</div><div class="a" style="left:2207px;top:1210.8px;width:88px;height:46.2px;border-radius:6px;background:#F2F4F4;border:1px solid #E9ECEE;box-sizing:border-box"></div><div class="a " style="left:2220.0px;top:1218.5px;line-height:32px;font-size:21.0px;color:#8A98A8;">下一个</div><div class="a " style="left:413.0px;top:1365.5px;line-height:29px;font-size:19.5px;color:#6E8198;letter-spacing:1.15px;">2020 © PIXINVENT</div><div class="a " style="left:2025.0px;top:1364.0px;line-height:32px;font-size:21.0px;color:#6E8198;">精心打造</div><div class="a " style="left:2151.0px;top:1364.0px;line-height:32px;font-size:21.0px;color:#6E8198;">作者:</div><div class="a " style="left:2220.0px;top:1365.5px;line-height:29px;font-size:19.5px;color:#6E8198;letter-spacing:0.95px;">PIXINVENT</div><svg class="a" style="left:2121px;top:1374px" width="16" height="14" viewBox="0 0 16 14"><path d="M8 14C2 9 0 7 0 4a4 4 0 0 1 8-1 4 4 0 0 1 8 1c0 3-2 5-8 10z" fill="#FF5B5C"/></svg><div class="a" style="left:2377.5px;top:72.0px;width:22.5px;height:1313.0px;background:#F1F1F1;"></div><div class="a" style="left:2379.5px;top:91.0px;width:19.5px;height:1248.0px;background:#C1C1C1;"></div><svg class="a" style="left:2383px;top:76px" width="12" height="8" viewBox="0 0 12 8"><path d="M0 7 L6 0.5 L12 7z" fill="#A3A3A3"/></svg><svg class="a" style="left:2383px;top:1373px" width="12" height="8" viewBox="0 0 12 8"><path d="M0 1 L6 7.5 L12 1z" fill="#505050"/></svg><div class="a" style="left:0.0px;top:0.0px;width:2400.0px;height:67.0px;background:#fff;"></div><div class="a" style="left:0.0px;top:0.0px;width:630.0px;height:1.0px;background:#DCE7FB;"></div><div class="a" style="left:790.0px;top:0.0px;width:1610.0px;height:1.0px;background:#DCE7FB;"></div><div class="a" style="left:0;top:0;width:10px;height:10px;background:radial-gradient(circle at 100% 100%,#fff 9px,#D3E3FD 10px)"></div><div class="a" style="left:2390px;top:0;width:10px;height:10px;background:radial-gradient(circle at 0 100%,#fff 9px,#D3E3FD 10px)"></div><div class="a" style="left:0.0px;top:66.0px;width:2400.0px;height:1.2px;background:#DFE2E0;"></div><div class="a" style="left:0.0px;top:67.3px;width:1407.0px;height:4.7px;background:#5A8DEE;"></div><div class="a" style="left:169px;top:9px;width:1813px;height:48px;border-radius:24px;background:#E8EBF3"></div><div class="a" style="left:176.5px;top:17.5px;width:32px;height:32px;border-radius:16px;background:#fff"></div><svg class="a" style="left:0;top:0" width="2400" height="67" viewBox="0 0 2400 67" fill="none" stroke="#474747" stroke-width="2.2"><path d="M40 33.300H24.500M31.800 25.300 23.800 33.300l8 8"/><path d="M73 33.300h15.500M81.200 25.300l8 8-8 8" stroke="#ABABAB"/><path d="M139.500 33.300a7.700 7.700 0 1 1-2.300-5.500"/><path d="M140 24.500v6.200h-6.200" /><g stroke="#303030" stroke-width="2.100"><circle cx="187.200" cy="28.500" r="2.300"/><path d="M192.500 28.500h8.500"/><circle cx="197.700" cy="38.300" r="2.300"/><path d="M184.300 38.300h8.700"/></g><path d="M1949 24.200l2.750 6 6.550 .750-4.850 4.450 1.300 6.450-5.750-3.250-5.750 3.250 1.300-6.450-4.850-4.450 6.550-.750z" stroke-linejoin="miter"/><path d="M2012.300 28.600H2017.700v-1.500a2.300 2.300 0 0 1 4.600 0v1.500H2027.100a1.200 1.200 0 0 1 1.200 1.200V30.900h1a2.300 2.300 0 0 1 0 4.600h-1V40.200a1.200 1.200 0 0 1-1.200 1.200H2012.300a1.200 1.200 0 0 1-1.200-1.200V35.500a2.100 2.100 0 0 0 0-4.200V29.800a1.200 1.200 0 0 1 1.200-1.200z"/><path d="M2095.300 22.500v15M2088.600 31.500l6.700 6.700 6.700-6.700M2085.600 37.800v5.400h19.600v-5.400" stroke-width="2.400"/></svg><svg class="a" style="left:1892px;top:21px" width="24" height="25" viewBox="0 0 24 25"><path d="M2.500 0.500h7.500l2 3.500h10a1.500 1.500 0 0 1 1.500 1.500v17a1.500 1.500 0 0 1-1.500 1.500H12.500l-1.600-4.500H2.500A1.500 1.500 0 0 1 1 18V2A1.500 1.500 0 0 1 2.500 .500z" fill="#474747"/><path d="M12.300 5.800h9.200v16.400h-8.200l-1-3.200z" fill="#E8EBF3"/><path d="M13 10h8M17 8.500v1.500M19.500 10c-.800 3.500-3 6-5.500 7.500M14.800 12.500c1 2.200 3 4 5.500 5.200" stroke="#474747" stroke-width="1.300" fill="none"/><text x="2.800" y="13.500" font-size="10.500" font-weight="700" fill="#fff" font-family="Liberation Sans,sans-serif">G</text></svg><div class="a" style="left:2056.0px;top:22.5px;width:2.5px;height:22.0px;background:#C7D8F8;border-radius:1px;"></div><div class="a" style="left:2132px;top:19.700px;width:28px;height:28px;border-radius:14px;background:#D3E3FD"></div><svg class="a" style="left:2132px;top:19.700px" width="28" height="28" viewBox="0 0 28 28" fill="#0B57D0"><circle cx="14" cy="9.800" r="4.600"/><path d="M5.500 22.200v-1.500c0-3.300 4.200-5 8.500-5s8.500 1.700 8.500 5v1.500z"/></svg><div class="a" style="left:2177px;top:9px;width:214.7px;height:48px;border-radius:24px;background:#D3E3FD"></div><div class="a sans" style="left:221.0px;top:18.0px;line-height:31px;font-size:20.5px;color:#1f1f1f;letter-spacing:0.43px;">cs.hwym.shop/admin/secured/package</div><div class="a sans" style="left:2193.0px;top:21.0px;line-height:26px;font-size:17.6px;color:#0a2150;">有新版 Chrome 可用</div><div class="a" style="left:2367.3px;top:23.2px;width:4.6px;height:4.6px;border-radius:2.3px;background:#0a2150"></div><div class="a" style="left:2367.3px;top:30.9px;width:4.6px;height:4.6px;border-radius:2.3px;background:#0a2150"></div><div class="a" style="left:2367.3px;top:38.6px;width:4.6px;height:4.6px;border-radius:2.3px;background:#0a2150"></div></body></html>
